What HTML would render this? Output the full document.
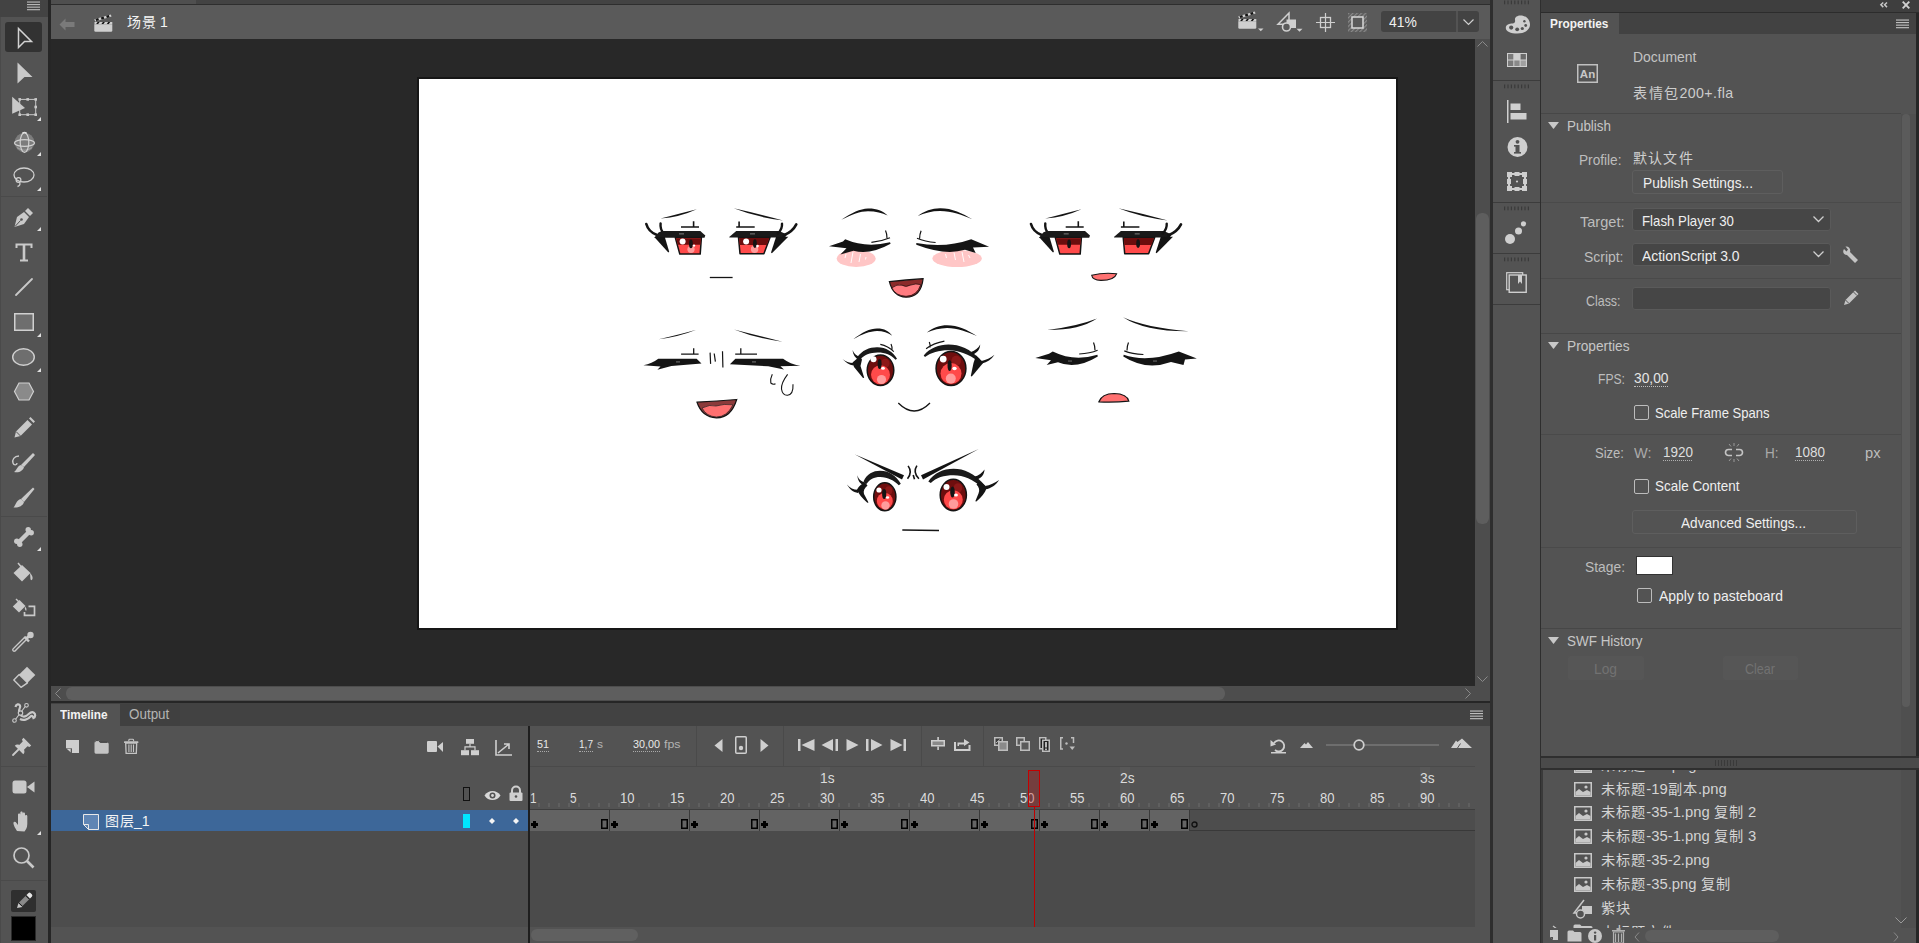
<!DOCTYPE html>
<html lang="zh-CN"><head><meta charset="utf-8">
<style>
*{margin:0;padding:0;box-sizing:border-box}
html,body{width:1919px;height:943px;overflow:hidden;background:#282828;font-family:"Liberation Sans",sans-serif;color:#d6d6d6;font-size:12px}
.a{position:absolute}
.t{position:absolute;white-space:nowrap;line-height:1}
svg{position:absolute;overflow:visible}
.cj{font-size:14px}
</style></head><body>

<div class="a" style="left:0px;top:0px;width:48px;height:943px;background:#535353;"></div>
<div class="a" style="left:0px;top:0px;width:48px;height:17px;background:#434343;"></div>
<div class="a" style="left:0px;top:17px;width:1px;height:926px;background:#4a4a4a;"></div>
<div class="a" style="left:48px;top:0px;width:3px;height:943px;background:#262626;"></div>
<div class="a" style="left:51px;top:0px;width:1439px;height:5px;background:#434343;"></div>
<div class="a" style="left:51px;top:0px;width:145px;height:4px;background:#4f4f4f;"></div>
<div class="a" style="left:51px;top:4px;width:1439px;height:1px;background:#2e2e2e;"></div>
<div class="a" style="left:51px;top:5px;width:1439px;height:34px;background:#5a5a5a;"></div>
<div class="a" style="left:51px;top:39px;width:1424px;height:647px;background:#282828;"></div>
<div class="a" style="left:1475px;top:39px;width:15px;height:662px;background:#4d4d4d;"></div>
<div class="a" style="left:1476px;top:213px;width:13px;height:311px;background:#5e5e5e;border-radius:6px"></div>
<div class="a" style="left:51px;top:686px;width:1424px;height:15px;background:#4d4d4d;"></div>
<div class="a" style="left:66px;top:687px;width:1159px;height:13px;background:#5e5e5e;border-radius:6px"></div>
<div class="a" style="left:51px;top:701px;width:1439px;height:2px;background:#262626;"></div>
<div class="a" style="left:417px;top:77px;width:981px;height:553px;background:#fff;border:2px solid #161616"></div>
<div class="a" style="left:51px;top:703px;width:1439px;height:23px;background:#424242;"></div>
<div class="a" style="left:51px;top:704px;width:69px;height:22px;background:#535353;"></div>
<div class="a" style="left:120px;top:704px;width:60px;height:22px;background:#404040;"></div>
<div class="a" style="left:51px;top:726px;width:1439px;height:217px;background:#535353;"></div>
<div class="a" style="left:51px;top:831px;width:478px;height:96px;background:#4d4d4d;"></div>
<div class="a" style="left:530px;top:831px;width:945px;height:96px;background:#4b4b4b;"></div>
<div class="a" style="left:1490px;top:0px;width:3px;height:943px;background:#2e2e2e;"></div>
<div class="a" style="left:1493px;top:0px;width:47px;height:943px;background:#535353;"></div>
<div class="a" style="left:1540px;top:0px;width:1px;height:943px;background:#2e2e2e;"></div>
<div class="a" style="left:1541px;top:0px;width:378px;height:943px;background:#535353;"></div>
<div class="a" style="left:1541px;top:0px;width:378px;height:13px;background:#3e3e3e;"></div>
<div class="a" style="left:1541px;top:13px;width:375px;height:21px;background:#424242;"></div>
<div class="a" style="left:1541px;top:13px;width:78px;height:21px;background:#535353;"></div>
<svg style="left:27px;top:1px" width="13" height="10" viewBox="0 0 13 10"><rect x="0" y="0.50" width="13" height="1.1" fill="#bdbdbd"/><rect x="0" y="3.05" width="13" height="1.1" fill="#bdbdbd"/><rect x="0" y="5.60" width="13" height="1.1" fill="#bdbdbd"/><rect x="0" y="8.15" width="13" height="1.1" fill="#bdbdbd"/></svg>
<div class="a" style="left:5px;top:22px;width:37px;height:30px;background:#323232;border-radius:3px"></div>
<svg style="left:17px;top:27px" width="16" height="22" viewBox="0 0 16 22"><path d="M1.5 1.5 L14.5 14.5 L7.5 14.5 L1.5 20.5 Z" fill="none" stroke="#d2d2d2" stroke-width="1.5" stroke-linejoin="miter"/></svg>
<svg style="left:17px;top:62px" width="16" height="22" viewBox="0 0 16 22"><path d="M0.5 0.5 L15.5 15 L7.5 15 L0.5 21.5 Z" fill="#c9c9c9"/></svg>
<svg style="left:12px;top:96px" width="26" height="20" viewBox="0 0 26 20"><path d="M0.2 0.8 L13 11.9 L0.2 17.8 Z" fill="#c9c9c9"/><rect x="7.7" y="3.4" width="16" height="15.3" fill="none" stroke="#c9c9c9" stroke-width="1"/><rect x="6.4" y="2.0999999999999996" width="2.6" height="2.6" fill="#c9c9c9"/><rect x="14.399999999999999" y="2.0999999999999996" width="2.6" height="2.6" fill="#c9c9c9"/><rect x="22.4" y="2.0999999999999996" width="2.6" height="2.6" fill="#c9c9c9"/><rect x="22.4" y="9.7" width="2.6" height="2.6" fill="#c9c9c9"/><rect x="22.4" y="17.4" width="2.6" height="2.6" fill="#c9c9c9"/><rect x="14.399999999999999" y="17.4" width="2.6" height="2.6" fill="#c9c9c9"/><rect x="6.4" y="17.4" width="2.6" height="2.6" fill="#c9c9c9"/></svg>
<svg style="left:37px;top:117px" width="4" height="4" viewBox="0 0 4 4"><path d="M4 0 L4 4 L0 4 Z" fill="#e0e0e0"/></svg>
<svg style="left:13.5px;top:131.5px" width="21" height="21" viewBox="0 0 21 21"><circle cx="10.5" cy="10.5" r="9.8" fill="#7c7c7c"/><path d="M3 15.5 Q10.5 21 18 15.5" stroke="#a0a0a0" stroke-width="1.2" fill="none"/><ellipse cx="10.5" cy="11" rx="10" ry="3.3" fill="none" stroke="#d0d0d0" stroke-width="1.3"/><ellipse cx="10.5" cy="10.5" rx="4.3" ry="9.8" fill="none" stroke="#d0d0d0" stroke-width="1.2"/><path d="M8.5 1 Q10.5 0 12.5 1" stroke="#e0e0e0" stroke-width="1.4" fill="none"/></svg>
<svg style="left:37px;top:152px" width="4" height="4" viewBox="0 0 4 4"><path d="M4 0 L4 4 L0 4 Z" fill="#e0e0e0"/></svg>
<svg style="left:13px;top:167px" width="22" height="21" viewBox="0 0 22 21"><ellipse cx="11" cy="8" rx="10" ry="7" fill="none" stroke="#cfcfcf" stroke-width="1.3"/><circle cx="5.5" cy="13" r="2.4" fill="none" stroke="#cfcfcf" stroke-width="1.2"/><path d="M6.5 15.2 C7.5 17 7 19 4.5 19.5" stroke="#cfcfcf" stroke-width="1.3" fill="none"/></svg>
<svg style="left:37px;top:187px" width="4" height="4" viewBox="0 0 4 4"><path d="M4 0 L4 4 L0 4 Z" fill="#e0e0e0"/></svg>
<div class="a" style="left:1px;top:196px;width:46px;height:1px;background:#4a4a4a;"></div>
<svg style="left:14px;top:207px" width="20" height="21" viewBox="0 0 20 21"><path d="M0.5 20 L3 10 L10 5 L15 10 L10 17 Z" fill="#c9c9c9"/><path d="M11 4 L14 1 L19 6 L16 9 Z" fill="#c9c9c9"/><path d="M1 19.5 L6.5 13.5" stroke="#535353" stroke-width="1"/><circle cx="7.5" cy="12.5" r="1.3" fill="#535353"/></svg>
<svg style="left:37px;top:227px" width="4" height="4" viewBox="0 0 4 4"><path d="M4 0 L4 4 L0 4 Z" fill="#e0e0e0"/></svg>
<svg style="left:15px;top:243px" width="18" height="19" viewBox="0 0 18 19"><path d="M0.5 0.5 H17.5 V5 H15.5 V2.5 H10.3 V16.5 H13 V18.5 H5 V16.5 H7.7 V2.5 H2.5 V5 H0.5 Z" fill="#c9c9c9"/></svg>
<svg style="left:15px;top:278px" width="18" height="18" viewBox="0 0 18 18"><path d="M1 17 L17 1" stroke="#c9c9c9" stroke-width="1.8" stroke-linecap="round"/></svg>
<svg style="left:14px;top:313px" width="20" height="18" viewBox="0 0 20 18"><rect x="0.75" y="0.75" width="18.5" height="16.5" fill="#6e6e6e" stroke="#d0d0d0" stroke-width="1.5"/></svg>
<svg style="left:37px;top:333px" width="4" height="4" viewBox="0 0 4 4"><path d="M4 0 L4 4 L0 4 Z" fill="#e0e0e0"/></svg>
<svg style="left:12px;top:348px" width="23" height="18" viewBox="0 0 23 18"><ellipse cx="11.5" cy="9" rx="10.8" ry="8.2" fill="#6e6e6e" stroke="#d0d0d0" stroke-width="1.4"/></svg>
<svg style="left:37px;top:368px" width="4" height="4" viewBox="0 0 4 4"><path d="M4 0 L4 4 L0 4 Z" fill="#e0e0e0"/></svg>
<svg style="left:14px;top:382px" width="20" height="19" viewBox="0 0 20 19"><path d="M5 1 H15 L19.5 9.5 L15 18 H5 L0.5 9.5 Z" fill="#8a8a8a" stroke="#d0d0d0" stroke-width="1.2"/></svg>
<svg style="left:14px;top:417px" width="21" height="21" viewBox="0 0 21 21"><path d="M0.5 20.5 L2 14.5 L13.5 3 L18 7.5 L6.5 19 Z" fill="#c9c9c9"/><path d="M15 1.5 L16.5 0 L21 4.5 L19.5 6 Z" fill="#c9c9c9"/><path d="M2 14.5 L6.5 19" stroke="#535353" stroke-width="1"/></svg>
<svg style="left:11px;top:452px" width="25" height="21" viewBox="0 0 25 21"><path d="M10 13 L22 1 L24 3 L13 15 Z" fill="#c9c9c9"/><path d="M13 15 C12 19 8 21 3 20 C6 18 6 14 10 13 Z" fill="#c9c9c9"/><path d="M8 4 C3 4 1 8 2 11 C3 14 6 13 6 11" fill="none" stroke="#c9c9c9" stroke-width="1.4"/></svg>
<svg style="left:13px;top:487px" width="22" height="21" viewBox="0 0 22 21"><path d="M8 12 L20 0.5 L21.5 2 L11 15 Z" fill="#c9c9c9"/><path d="M11 15 C10 19 5 21 0.5 20.5 C3 18 3 13 8 12 Z" fill="#c9c9c9"/></svg>
<div class="a" style="left:1px;top:516px;width:46px;height:1px;background:#4a4a4a;"></div>
<svg style="left:14px;top:527px" width="20" height="20" viewBox="0 0 20 20"><path d="M5 15 L15 5" stroke="#c9c9c9" stroke-width="4.5"/><circle cx="2.8" cy="14.2" r="2.7" fill="#c9c9c9"/><circle cx="5.8" cy="17.2" r="2.7" fill="#c9c9c9"/><circle cx="14.2" cy="2.8" r="2.7" fill="#c9c9c9"/><circle cx="17.2" cy="5.8" r="2.7" fill="#c9c9c9"/></svg>
<svg style="left:37px;top:547px" width="4" height="4" viewBox="0 0 4 4"><path d="M4 0 L4 4 L0 4 Z" fill="#e0e0e0"/></svg>
<svg style="left:13px;top:562px" width="21" height="21" viewBox="0 0 21 21"><path d="M0.5 11 L9 3 L17.5 11 L9 19.5 Z" fill="#c9c9c9"/><path d="M5 1 L10 7" stroke="#c9c9c9" stroke-width="1.5"/><path d="M17 11 C19 13 20 15 19.5 17 C19 18.5 17.5 18.5 17.5 17 Z" fill="#c9c9c9"/></svg>
<svg style="left:12px;top:598px" width="24" height="19" viewBox="0 0 24 19"><path d="M0.8 8.5 L7.5 2 L13.5 8 L7 14.5 Z" fill="#c9c9c9"/><path d="M4 1 L8.5 5.5" stroke="#c9c9c9" stroke-width="1.4"/><path d="M13 8.5 C14.5 10 15 11.5 14 13 C13 11.5 12.5 10.5 13 8.5 Z" fill="#c9c9c9"/><path d="M16.5 8.3 H22.5 V17.3 H12.5 V14" stroke="#c9c9c9" stroke-width="1.7" fill="none"/></svg>
<svg style="left:12px;top:631px" width="23" height="22" viewBox="0 0 23 22"><circle cx="18.5" cy="4" r="3.2" fill="#c9c9c9"/><path d="M12.5 6 L17 10.5" stroke="#c9c9c9" stroke-width="2.4"/><path d="M15 8 L4 19 Q2.5 21 1.2 19.8 Q0 18.5 2 17 L13 6 Z" fill="none" stroke="#c9c9c9" stroke-width="1.4"/><path d="M14.5 7.5 L16.5 5.5" stroke="#c9c9c9" stroke-width="3"/></svg>
<svg style="left:13px;top:666px" width="23" height="22" viewBox="0 0 23 22"><path d="M14 0.7 L22.3 9 L14.5 16.8 L6.2 8.5 Z" fill="#c9c9c9"/><path d="M6.2 8.5 L14.5 16.8 L8 21.3 L0.8 14 Z" fill="none" stroke="#c9c9c9" stroke-width="1.4" stroke-linejoin="round"/></svg>
<svg style="left:12px;top:703px" width="25" height="21" viewBox="0 0 25 21"><path d="M3.5 4 C4 1 7 0.5 8 2.5 C9 4.5 6.5 6 7 9 C7.5 12.5 11 14.5 14 13 C17 11.5 18.5 8 21.5 9.5 C24 11 23.5 14 21.5 15 C21 13 19.5 12.5 18.5 13.5 C16 16.5 11.5 18 8 16" stroke="#c9c9c9" stroke-width="2.2" fill="none"/><path d="M3 17 L14 2.5" stroke="#c9c9c9" stroke-width="1.2"/><circle cx="2.5" cy="17.5" r="1.8" fill="#535353" stroke="#c9c9c9" stroke-width="1.1"/><circle cx="14.5" cy="2.3" r="1.8" fill="#535353" stroke="#c9c9c9" stroke-width="1.1"/><circle cx="8.5" cy="10" r="2.2" fill="#535353" stroke="#c9c9c9" stroke-width="1.2"/></svg>
<svg style="left:12px;top:737px" width="20" height="19" viewBox="0 0 20 19"><path d="M11.5 0.8 L19.2 8.5 L17.5 10 L15.5 9.3 L12 12.8 C12.8 14.5 12.5 16 11.3 17.2 L2.8 8.7 C4 7.5 5.5 7.2 7.2 8 L10.7 4.5 L10 2.5 Z" fill="#c9c9c9"/><path d="M6.5 12.5 L1 18" stroke="#c9c9c9" stroke-width="1.8" stroke-linecap="round"/></svg>
<div class="a" style="left:1px;top:766px;width:46px;height:1px;background:#4a4a4a;"></div>
<svg style="left:12px;top:780px" width="23" height="14" viewBox="0 0 23 14"><rect x="0.5" y="0.5" width="14" height="13" rx="2.5" fill="#c9c9c9"/><path d="M15 7 L22.5 1.5 V12.5 Z" fill="#c9c9c9"/></svg>
<svg style="left:13px;top:811px" width="21" height="21" viewBox="0 0 21 21"><path d="M4 20 C2 17 0 13 0.5 11.5 C1 10.5 2.5 10.5 3.5 12 L5 14 V3.5 C5 2 7.3 2 7.3 3.5 V10 V1.8 C7.3 0.2 9.7 0.2 9.7 1.8 V10 V2.8 C9.7 1.2 12 1.2 12 2.8 V10.5 V5 C12 3.5 14.3 3.5 14.3 5 V13 C14.3 17 12.5 19 11.5 20.5 Z" fill="#c9c9c9"/></svg>
<svg style="left:37px;top:831px" width="4" height="4" viewBox="0 0 4 4"><path d="M4 0 L4 4 L0 4 Z" fill="#e0e0e0"/></svg>
<svg style="left:13px;top:847px" width="22" height="21" viewBox="0 0 22 21"><circle cx="8.5" cy="8.5" r="7.5" fill="none" stroke="#c9c9c9" stroke-width="1.7"/><path d="M14 14 L20.5 20.5" stroke="#c9c9c9" stroke-width="2.6"/></svg>
<div class="a" style="left:1px;top:880px;width:46px;height:1px;background:#4a4a4a;"></div>
<div class="a" style="left:11px;top:890px;width:25px;height:22px;background:#2f2f2f;border-radius:2px"></div>
<svg style="left:16px;top:892px" width="16" height="17" viewBox="0 0 16 17"><path d="M1 16 L2.5 11 L6.5 15 Z" fill="#c9c9c9"/><path d="M3 10.5 L10 3.5 L13.5 7 L6.5 14 Z" fill="#8a8a8a"/><path d="M10.5 3 L12.3 1.2 Q13.5 0 14.7 1.2 L15.8 2.3 Q17 3.5 15.8 4.7 L14 6.5 Z" fill="#e6e6e6"/><path d="M2.7 10.8 L6.2 14.3 M9.7 3.8 L13.2 7.3" stroke="#1e1e1e" stroke-width="1"/></svg>
<div class="a" style="left:11px;top:916px;width:25px;height:25px;background:#000;border:1px solid #2a2a2a"></div>
<svg style="left:1880px;top:2px" width="8" height="6" viewBox="0 0 8 6"><path d="M3.3 0.5 L0.9 2.8 L3.3 5.1 M7 0.5 L4.6 2.8 L7 5.1" stroke="#c8c8c8" stroke-width="1.5" fill="none"/></svg>
<div class="a" style="left:1541px;top:12px;width:378px;height:1px;background:#2c2c2c;"></div>
<svg style="left:1902px;top:1px" width="8" height="8" viewBox="0 0 8 8"><path d="M0.7 0.7 L7.3 7.3 M7.3 0.7 L0.7 7.3" stroke="#d0d0d0" stroke-width="1.9" fill="none"/></svg>
<div class="t" style="left:1550px;top:17.33px;font-size:13.2px;color:#f2f2f2;font-weight:bold;transform:scaleX(0.8960);transform-origin:0 0;">Properties</div>
<svg style="left:1896px;top:19px" width="13" height="10" viewBox="0 0 13 10"><rect x="0" y="0.50" width="13" height="1.1" fill="#c4c4c4"/><rect x="0" y="3.05" width="13" height="1.1" fill="#c4c4c4"/><rect x="0" y="5.60" width="13" height="1.1" fill="#c4c4c4"/><rect x="0" y="8.15" width="13" height="1.1" fill="#c4c4c4"/></svg>
<div class="a" style="left:1901px;top:114px;width:15px;height:643px;background:#4f4f4f;"></div>
<div class="a" style="left:1902px;top:114px;width:8px;height:593px;background:#5b5b5b;border-radius:4px"></div>
<div class="a" style="left:1916px;top:13px;width:3px;height:744px;background:#262626;"></div>
<svg style="left:1577px;top:64px" width="21" height="19" viewBox="0 0 21 19"><rect x="0.75" y="0.75" width="19.5" height="17.5" fill="none" stroke="#c0c0c0" stroke-width="1.5"/><text x="10.5" y="13.6" font-family="Liberation Sans" font-size="11.5" font-weight="bold" fill="#c8c8c8" text-anchor="middle">An</text></svg>
<div class="t" style="left:1633px;top:50.40px;font-size:14.3px;color:#c4c4c4;font-weight:normal;transform:scaleX(0.9743);transform-origin:0 0;">Document</div>
<div class="t" style="left:1633px;top:86.15px;font-size:14.00px;color:#cccccc;font-weight:normal;"><span style="font-size:14px;letter-spacing:1.5px">表情包</span><span style="font-size:14.2px;letter-spacing:0.4px">200+.fla</span></div>
<div class="a" style="left:1541px;top:113px;width:360px;height:1px;background:#474747;"></div>
<svg style="left:1548px;top:122px" width="11" height="7" viewBox="0 0 11 7"><path d="M0 0 L11 0 L5.5 7 Z" fill="#c8c8c8"/></svg>
<div class="t" style="left:1567px;top:118.50px;font-size:14.3px;color:#c6c6c6;font-weight:normal;transform:scaleX(0.9381);transform-origin:0 0;">Publish</div>
<div class="t" style="left:1579px;top:152.70px;font-size:14.3px;color:#bdbdbd;font-weight:normal;transform:scaleX(0.9549);transform-origin:0 0;">Profile:</div>
<div class="t" style="left:1633px;top:151.35px;font-size:14.00px;color:#cfcfcf;font-weight:normal;"><span class="cj" style="letter-spacing:1.2px">默认文件</span></div>
<div class="a" style="left:1632px;top:170px;width:151px;height:24px;background:transparent;border:1px solid #5e5e5e;border-radius:3px"></div>
<div class="t" style="left:1643px;top:175.70px;font-size:14.3px;color:#efefef;font-weight:normal;transform:scaleX(0.9610);transform-origin:0 0;">Publish Settings...</div>
<div class="a" style="left:1541px;top:202px;width:360px;height:1px;background:#4a4a4a;"></div>
<div class="t" style="left:1580px;top:215.20px;font-size:14.3px;color:#bdbdbd;font-weight:normal;transform:scaleX(1.0179);transform-origin:0 0;">Target:</div>
<div class="a" style="left:1632px;top:208px;width:199px;height:23px;background:#464646;border:1px solid #5a5a5a;border-radius:3px"></div>
<div class="t" style="left:1642px;top:213.50px;font-size:14.3px;color:#efefef;font-weight:normal;transform:scaleX(0.9260);transform-origin:0 0;">Flash Player 30</div>
<svg style="left:1813px;top:216px" width="11" height="6" viewBox="0 0 11 6"><path d="M0.5 0.5 L5.5 5.5 L10.5 0.5" stroke="#cfcfcf" stroke-width="1.3" fill="none"/></svg>
<div class="t" style="left:1584px;top:250.20px;font-size:14.3px;color:#bdbdbd;font-weight:normal;transform:scaleX(0.9747);transform-origin:0 0;">Script:</div>
<div class="a" style="left:1632px;top:243px;width:199px;height:23px;background:#464646;border:1px solid #5a5a5a;border-radius:3px"></div>
<div class="t" style="left:1642px;top:248.50px;font-size:14.3px;color:#efefef;font-weight:normal;transform:scaleX(0.9735);transform-origin:0 0;">ActionScript 3.0</div>
<svg style="left:1813px;top:251px" width="11" height="6" viewBox="0 0 11 6"><path d="M0.5 0.5 L5.5 5.5 L10.5 0.5" stroke="#cfcfcf" stroke-width="1.3" fill="none"/></svg>
<svg style="left:1841px;top:245px" width="18" height="19" viewBox="0 0 18 19"><path d="M3 4 C1 7 3 10 6 10 L14 18 L17 15 L9 7 C10 4 8 1 4.5 1.5 L7 4.5 L5.5 6.5 Z" fill="#c4c4c4"/></svg>
<div class="a" style="left:1541px;top:278px;width:360px;height:1px;background:#4a4a4a;"></div>
<div class="t" style="left:1586px;top:293.60px;font-size:14.3px;color:#bdbdbd;font-weight:normal;transform:scaleX(0.8683);transform-origin:0 0;">Class:</div>
<div class="a" style="left:1632px;top:287px;width:199px;height:23px;background:#464646;border:1px solid #5a5a5a;border-radius:3px"></div>
<svg style="left:1843px;top:289px" width="17" height="17" viewBox="0 0 17 17"><path d="M1 16 L2.5 11 L12 1.5 L15.5 5 L6 14.5 Z" fill="#c4c4c4"/><path d="M2.5 11 L6 14.5" stroke="#535353" stroke-width="1"/><path d="M10.5 3 L14 6.5" stroke="#535353" stroke-width="1"/></svg>
<div class="a" style="left:1541px;top:333px;width:360px;height:1px;background:#474747;"></div>
<svg style="left:1548px;top:342px" width="11" height="7" viewBox="0 0 11 7"><path d="M0 0 L11 0 L5.5 7 Z" fill="#c8c8c8"/></svg>
<div class="t" style="left:1567px;top:338.50px;font-size:14.3px;color:#c6c6c6;font-weight:normal;transform:scaleX(0.9590);transform-origin:0 0;">Properties</div>
<div class="t" style="left:1598px;top:372.30px;font-size:14.3px;color:#bdbdbd;font-weight:normal;transform:scaleX(0.8495);transform-origin:0 0;">FPS:</div>
<div class="t" style="left:1634px;top:370.50px;font-size:14.3px;color:#e6e6e6;font-weight:normal;transform:scaleX(0.9641);transform-origin:0 0;">30,00</div>
<div class="a" style="left:1634px;top:386px;width:34px;height:1px;background:transparent;border-top:1px dotted #bdbdbd"></div>
<div class="a" style="left:1634px;top:405px;width:15px;height:15px;background:transparent;border:1px solid #bcbcbc;border-radius:2px"></div>
<div class="t" style="left:1655px;top:405.50px;font-size:14.3px;color:#efefef;font-weight:normal;transform:scaleX(0.9118);transform-origin:0 0;">Scale Frame Spans</div>
<div class="a" style="left:1541px;top:434px;width:360px;height:1px;background:#4a4a4a;"></div>
<div class="t" style="left:1595px;top:446.20px;font-size:14.3px;color:#bdbdbd;font-weight:normal;transform:scaleX(0.9122);transform-origin:0 0;">Size:</div>
<div class="t" style="left:1634px;top:446.20px;font-size:14.3px;color:#aaaaaa;font-weight:normal;transform:scaleX(1.0166);transform-origin:0 0;">W:</div>
<div class="t" style="left:1662.5px;top:444.50px;font-size:14.3px;color:#dedede;font-weight:normal;transform:scaleX(0.9430);transform-origin:0 0;">1920</div>
<div class="a" style="left:1663px;top:460px;width:29px;height:1px;background:transparent;border-top:1px dotted #b0b0b0"></div>
<svg style="left:1724px;top:443px" width="20" height="19" viewBox="0 0 20 19"><path d="M8 6.5 L4.5 6.5 A3 3 0 0 0 4.5 12.5 L8 12.5 M12 6.5 L15.5 6.5 A3 3 0 0 1 15.5 12.5 L12 12.5" stroke="#c4c4c4" stroke-width="1.6" fill="none"/><path d="M10 0 V3 M10 16 V19 M5 1 L7 3.5 M15 1 L13 3.5 M5 18 L7 15.5 M15 18 L13 15.5" stroke="#9a9a9a" stroke-width="1"/></svg>
<div class="t" style="left:1765px;top:446.20px;font-size:14.3px;color:#aaaaaa;font-weight:normal;transform:scaleX(0.9441);transform-origin:0 0;">H:</div>
<div class="t" style="left:1795px;top:444.50px;font-size:14.3px;color:#dedede;font-weight:normal;transform:scaleX(0.9430);transform-origin:0 0;">1080</div>
<div class="a" style="left:1795px;top:460px;width:29px;height:1px;background:transparent;border-top:1px dotted #b0b0b0"></div>
<div class="t" style="left:1865px;top:446.20px;font-size:14.3px;color:#bdbdbd;font-weight:normal;transform:scaleX(1.0262);transform-origin:0 0;">px</div>
<div class="a" style="left:1634px;top:479px;width:15px;height:15px;background:transparent;border:1px solid #bcbcbc;border-radius:2px"></div>
<div class="t" style="left:1655px;top:479.00px;font-size:14.3px;color:#efefef;font-weight:normal;transform:scaleX(0.9407);transform-origin:0 0;">Scale Content</div>
<div class="a" style="left:1632px;top:510px;width:225px;height:24px;background:transparent;border:1px solid #5e5e5e;border-radius:3px"></div>
<div class="t" style="left:1681px;top:515.70px;font-size:14.3px;color:#efefef;font-weight:normal;transform:scaleX(0.9530);transform-origin:0 0;">Advanced Settings...</div>
<div class="a" style="left:1541px;top:547px;width:360px;height:1px;background:#4a4a4a;"></div>
<div class="t" style="left:1585px;top:560.20px;font-size:14.3px;color:#bdbdbd;font-weight:normal;transform:scaleX(0.9675);transform-origin:0 0;">Stage:</div>
<div class="a" style="left:1636px;top:556px;width:37px;height:19px;background:#ffffff;border:1px solid #333"></div>
<div class="a" style="left:1637px;top:588px;width:15px;height:15px;background:transparent;border:1px solid #bcbcbc;border-radius:2px"></div>
<div class="t" style="left:1658.5px;top:588.50px;font-size:14.3px;color:#efefef;font-weight:normal;transform:scaleX(0.9748);transform-origin:0 0;">Apply to pasteboard</div>
<div class="a" style="left:1541px;top:628px;width:360px;height:1px;background:#474747;"></div>
<svg style="left:1548px;top:637px" width="11" height="7" viewBox="0 0 11 7"><path d="M0 0 L11 0 L5.5 7 Z" fill="#c8c8c8"/></svg>
<div class="t" style="left:1567px;top:633.50px;font-size:14.3px;color:#c6c6c6;font-weight:normal;transform:scaleX(0.9410);transform-origin:0 0;">SWF History</div>
<div class="a" style="left:1568px;top:656px;width:76px;height:24px;background:#565656;border-radius:2px"></div>
<div class="t" style="left:1594px;top:662.30px;font-size:14.3px;color:#727272;font-weight:normal;transform:scaleX(0.9639);transform-origin:0 0;">Log</div>
<div class="a" style="left:1723px;top:656px;width:75px;height:24px;background:#565656;border-radius:2px"></div>
<div class="t" style="left:1745px;top:662.30px;font-size:14.3px;color:#727272;font-weight:normal;transform:scaleX(0.8779);transform-origin:0 0;">Clear</div>
<div class="a" style="left:1541px;top:756px;width:378px;height:2px;background:#2f2f2f;"></div>
<div class="a" style="left:1541px;top:758px;width:378px;height:10px;background:#4a4a4a;"></div>
<svg style="left:1715px;top:759px" width="24" height="8" viewBox="0 0 24 8"><rect x="0" y="1" width="1" height="6" fill="#3a3a3a"/><rect x="3" y="1" width="1" height="6" fill="#3a3a3a"/><rect x="6" y="1" width="1" height="6" fill="#3a3a3a"/><rect x="9" y="1" width="1" height="6" fill="#3a3a3a"/><rect x="12" y="1" width="1" height="6" fill="#3a3a3a"/><rect x="15" y="1" width="1" height="6" fill="#3a3a3a"/><rect x="18" y="1" width="1" height="6" fill="#3a3a3a"/><rect x="21" y="1" width="1" height="6" fill="#3a3a3a"/></svg>
<div class="a" style="left:1541px;top:768px;width:378px;height:2px;background:#2f2f2f;"></div>
<div class="a" style="left:1541px;top:770px;width:2px;height:173px;background:#3a3a3a;"></div>
<div class="a" style="left:1901px;top:770px;width:15px;height:158px;background:#4f4f4f;"></div>
<svg style="left:1895px;top:917px" width="12" height="7" viewBox="0 0 12 7"><path d="M0.5 0.5 L6 6 L11.5 0.5" stroke="#9a9a9a" stroke-width="1" fill="none"/></svg>
<div class="a" style="left:1916px;top:770px;width:3px;height:173px;background:#262626;"></div>
<div class="a" style="left:1543px;top:770px;width:358px;height:158px;overflow:hidden">
<svg style="left:31px;top:-12px" width="18" height="15" viewBox="0 0 18 15"><rect x="0" y="0" width="18" height="15" fill="#c8c8c8"/><rect x="1.5" y="1.5" width="15" height="12" fill="#535353"/><path d="M1.5 13.5 L1.5 10 L5 7 L9 10 L13 8 L16.5 10 L16.5 13.5 Z" fill="#c8c8c8"/></svg>
<div class="t" style="left:58px;top:-11.52px;font-size:14.20px;color:#d4d4d4;font-weight:normal;"><span style="font-size:14.2px;letter-spacing:1.1px">未标题</span><span style="font-size:14.8px">-19.png</span></div>
<svg style="left:9px;top:155px" width="6" height="8" viewBox="0 0 6 8"><path d="M1 1 L5 4" stroke="#c8c8c8" stroke-width="1.2"/></svg>
<svg style="left:30px;top:154px" width="20" height="12" viewBox="0 0 20 12"><path d="M0.5 2 Q0.5 0.5 2 0.5 H7 L8.5 2 H18 Q19.5 2 19.5 3.5 V11.5 H0.5 Z" fill="#c8c8c8"/></svg>
<div class="t" style="left:58px;top:154.98px;font-size:14.20px;color:#d4d4d4;font-weight:normal;"><span style="font-size:14.2px;letter-spacing:1.1px">未标题文件</span></div>
</div>
<svg style="left:1574px;top:782px" width="18" height="15" viewBox="0 0 18 15"><rect x="0" y="0" width="18" height="15" fill="#c8c8c8"/><rect x="1.5" y="1.5" width="15" height="12" fill="#535353"/><path d="M1.5 13.5 L1.5 10 L5 7 L9 10 L13 8 L16.5 10 L16.5 13.5 Z" fill="#c8c8c8"/><circle cx="12" cy="5" r="1.6" fill="#c8c8c8"/></svg>
<div class="t" style="left:1601px;top:781.98px;font-size:14.20px;color:#d4d4d4;font-weight:normal;"><span style="font-size:14.2px;letter-spacing:1.1px">未标题</span><span style="font-size:14.8px">-19</span><span style="font-size:14.2px;letter-spacing:1.1px">副本</span><span style="font-size:14.8px">.png</span></div>
<svg style="left:1574px;top:805.5px" width="18" height="15" viewBox="0 0 18 15"><rect x="0" y="0" width="18" height="15" fill="#c8c8c8"/><rect x="1.5" y="1.5" width="15" height="12" fill="#535353"/><path d="M1.5 13.5 L1.5 10 L5 7 L9 10 L13 8 L16.5 10 L16.5 13.5 Z" fill="#c8c8c8"/><circle cx="12" cy="5" r="1.6" fill="#c8c8c8"/></svg>
<div class="t" style="left:1601px;top:805.48px;font-size:14.20px;color:#d4d4d4;font-weight:normal;"><span style="font-size:14.2px;letter-spacing:1.1px">未标题</span><span style="font-size:14.8px">-35-1.png </span><span style="font-size:14.2px;letter-spacing:1.1px">复制</span><span style="font-size:14.8px"> 2</span></div>
<svg style="left:1574px;top:829px" width="18" height="15" viewBox="0 0 18 15"><rect x="0" y="0" width="18" height="15" fill="#c8c8c8"/><rect x="1.5" y="1.5" width="15" height="12" fill="#535353"/><path d="M1.5 13.5 L1.5 10 L5 7 L9 10 L13 8 L16.5 10 L16.5 13.5 Z" fill="#c8c8c8"/><circle cx="12" cy="5" r="1.6" fill="#c8c8c8"/></svg>
<div class="t" style="left:1601px;top:828.98px;font-size:14.20px;color:#d4d4d4;font-weight:normal;"><span style="font-size:14.2px;letter-spacing:1.1px">未标题</span><span style="font-size:14.8px">-35-1.png </span><span style="font-size:14.2px;letter-spacing:1.1px">复制</span><span style="font-size:14.8px"> 3</span></div>
<svg style="left:1574px;top:853px" width="18" height="15" viewBox="0 0 18 15"><rect x="0" y="0" width="18" height="15" fill="#c8c8c8"/><rect x="1.5" y="1.5" width="15" height="12" fill="#535353"/><path d="M1.5 13.5 L1.5 10 L5 7 L9 10 L13 8 L16.5 10 L16.5 13.5 Z" fill="#c8c8c8"/><circle cx="12" cy="5" r="1.6" fill="#c8c8c8"/></svg>
<div class="t" style="left:1601px;top:852.98px;font-size:14.20px;color:#d4d4d4;font-weight:normal;"><span style="font-size:14.2px;letter-spacing:1.1px">未标题</span><span style="font-size:14.8px">-35-2.png</span></div>
<svg style="left:1574px;top:877px" width="18" height="15" viewBox="0 0 18 15"><rect x="0" y="0" width="18" height="15" fill="#c8c8c8"/><rect x="1.5" y="1.5" width="15" height="12" fill="#535353"/><path d="M1.5 13.5 L1.5 10 L5 7 L9 10 L13 8 L16.5 10 L16.5 13.5 Z" fill="#c8c8c8"/><circle cx="12" cy="5" r="1.6" fill="#c8c8c8"/></svg>
<div class="t" style="left:1601px;top:876.98px;font-size:14.20px;color:#d4d4d4;font-weight:normal;"><span style="font-size:14.2px;letter-spacing:1.1px">未标题</span><span style="font-size:14.8px">-35.png </span><span style="font-size:14.2px;letter-spacing:1.1px">复制</span></div>
<svg style="left:1573px;top:899px" width="20" height="20" viewBox="0 0 20 20"><path d="M11 1 L1 14 L11 14" stroke="#c8c8c8" stroke-width="1.5" fill="none"/><rect x="9" y="7" width="10" height="8" fill="#c8c8c8"/><circle cx="7.5" cy="15" r="4" fill="#535353" stroke="#c8c8c8" stroke-width="1.5"/></svg>
<div class="t" style="left:1601px;top:900.98px;font-size:14.20px;color:#d4d4d4;font-weight:normal;"><span style="font-size:14.2px;letter-spacing:1.1px">紫块</span></div>
<svg style="left:1573px;top:924px" width="20" height="4" viewBox="0 0 20 4"><path d="M2 3 L2 1.5 L7 1.5 L9 3 Z" fill="#c8c8c8"/></svg>
<div class="a" style="left:1543px;top:928px;width:358px;height:15px;background:#535353;"></div>
<svg style="left:1549px;top:929px" width="10" height="12" viewBox="0 0 10 12"><path d="M1 1 H9 V11 H4 L1 8 Z" fill="#c8c8c8"/><path d="M1 8 L4 8 L4 11" fill="#535353"/></svg>
<svg style="left:1567px;top:930px" width="15" height="12" viewBox="0 0 15 12"><path d="M0.5 2 Q0.5 0.5 2 0.5 H6 L7.5 2 H13 Q14.5 2 14.5 3.5 V11.5 H0.5 Z" fill="#c8c8c8"/></svg>
<svg style="left:1588px;top:929px" width="14" height="14" viewBox="0 0 14 14"><circle cx="7" cy="7" r="7" fill="#c8c8c8"/><rect x="6" y="6" width="2.2" height="5.5" fill="#535353"/><circle cx="7.1" cy="3.6" r="1.2" fill="#535353"/></svg>
<svg style="left:1612px;top:928px" width="13" height="15" viewBox="0 0 13 15"><rect x="0" y="2" width="13" height="1.5" fill="#b0b0b0"/><rect x="4.5" y="0" width="4" height="2" fill="#b0b0b0"/><path d="M1.5 4 H11.5 V15 H1.5 Z M3.5 5.5 V14 M6.5 5.5 V14 M9.5 5.5 V14" stroke="#b0b0b0" stroke-width="1.2" fill="none"/></svg>
<svg style="left:1634px;top:932px" width="6" height="10" viewBox="0 0 6 10"><path d="M5 0.5 L1 5 L5 9.5" stroke="#8a8a8a" stroke-width="1" fill="none"/></svg>
<div class="a" style="left:1645px;top:930px;width:134px;height:12px;background:#5e5e5e;border-radius:6px"></div>
<svg style="left:1893px;top:932px" width="6" height="10" viewBox="0 0 6 10"><path d="M1 0.5 L5 5 L1 9.5" stroke="#8a8a8a" stroke-width="1" fill="none"/></svg>
<svg style="left:59px;top:18px" width="16" height="13" viewBox="0 0 16 13"><path d="M0.5 6.5 L6.5 0.5 V4 H15.5 V9 H6.5 V12.5 Z" fill="#7a7a7a"/></svg>
<svg style="left:94px;top:14px" width="19" height="18" viewBox="0 0 19 18"><path d="M0.3 5.2 L16.7 0.5 L17.6 2.6 L1.1 7.6 Z" fill="#cfcfcf"/><path d="M1.5 4.90 L4.2 4.10 L5.0 6.30 L2.3 7.10 Z" fill="#111"/><path d="M6.8 3.38 L9.5 2.58 L10.3 4.78 L7.6 5.58 Z" fill="#111"/><path d="M12.1 1.86 L14.8 1.06 L15.6 3.26 L12.9 4.06 Z" fill="#111"/><rect x="0.5" y="8" width="17.8" height="2.2" fill="#cfcfcf"/><path d="M2.0 10.2 L3.6 8 L5.6 8 L4.0 10.2 Z" fill="#111"/><path d="M7.3 10.2 L8.9 8 L10.9 8 L9.3 10.2 Z" fill="#111"/><path d="M12.6 10.2 L14.2 8 L16.2 8 L14.6 10.2 Z" fill="#111"/><path d="M0.3 10.2 H18.3 V16.5 Q18.3 17.8 17 17.8 H1.6 Q0.3 17.8 0.3 16.5 Z" fill="#cfcfcf"/></svg>
<div class="t" style="left:127px;top:15.15px;font-size:14.00px;color:#f4f4f4;font-weight:normal;"><span class="cj" style="letter-spacing:0.5px">场景</span><span style="font-size:14px"> 1</span></div>
<svg style="left:1237.5px;top:11px" width="26" height="21" viewBox="0 0 26 21"><path d="M0.3 5.2 L16.7 0.5 L17.6 2.6 L1.1 7.6 Z" fill="#cfcfcf"/><path d="M1.5 4.90 L4.2 4.10 L5.0 6.30 L2.3 7.10 Z" fill="#111"/><path d="M6.8 3.38 L9.5 2.58 L10.3 4.78 L7.6 5.58 Z" fill="#111"/><path d="M12.1 1.86 L14.8 1.06 L15.6 3.26 L12.9 4.06 Z" fill="#111"/><rect x="0.5" y="8" width="17.8" height="2.2" fill="#cfcfcf"/><path d="M2.0 10.2 L3.6 8 L5.6 8 L4.0 10.2 Z" fill="#111"/><path d="M7.3 10.2 L8.9 8 L10.9 8 L9.3 10.2 Z" fill="#111"/><path d="M12.6 10.2 L14.2 8 L16.2 8 L14.6 10.2 Z" fill="#111"/><path d="M0.3 10.2 H18.3 V16.5 Q18.3 17.8 17 17.8 H1.6 Q0.3 17.8 0.3 16.5 Z" fill="#cfcfcf"/><path d="M20 17.5 H25.5 L22.75 20.3 Z" fill="#cfcfcf"/></svg>
<svg style="left:1277px;top:11.5px" width="27" height="21" viewBox="0 0 27 21"><path d="M12 1 L1 12.2 H12 Z" fill="none" stroke="#cfcfcf" stroke-width="1.5" stroke-linejoin="miter"/><rect x="9.5" y="7.5" width="9.5" height="8.5" fill="#cfcfcf"/><circle cx="9.5" cy="15" r="4" fill="#5a5a5a" stroke="#cfcfcf" stroke-width="1.6"/><path d="M19.5 16.8 H25.5 L22.5 19.8 Z" fill="#cfcfcf"/></svg>
<svg style="left:1316px;top:12.5px" width="19" height="19" viewBox="0 0 19 19"><rect x="4.5" y="4.5" width="10" height="10" fill="none" stroke="#cfcfcf" stroke-width="1.3"/><path d="M9.5 0 V19 M0 9.5 H19" stroke="#cfcfcf" stroke-width="1.2"/></svg>
<svg style="left:1348px;top:13px" width="19" height="19" viewBox="0 0 19 19"><defs><pattern id="hatch" width="3" height="3" patternUnits="userSpaceOnUse" patternTransform="rotate(45)"><rect width="1.3" height="3" fill="#8a8a8a"/></pattern></defs><rect x="0" y="0" width="19" height="19" fill="url(#hatch)"/><rect x="4" y="4" width="11" height="11" fill="#5a5a5a" stroke="#d8d8d8" stroke-width="1.5"/></svg>
<div class="a" style="left:1381px;top:11px;width:98px;height:21px;background:#434343;border-radius:3px"></div>
<div class="a" style="left:1456px;top:11px;width:2px;height:21px;background:#535353;"></div>
<div class="t" style="left:1388.5px;top:15.00px;font-size:14.3px;color:#f0f0f0;font-weight:normal;transform:scaleX(0.9713);transform-origin:0 0;">41%</div>
<svg style="left:1463px;top:19px" width="11" height="6" viewBox="0 0 11 6"><path d="M0.5 0.5 L5.5 5.5 L10.5 0.5" stroke="#cfcfcf" stroke-width="1.2" fill="none"/></svg>
<svg style="left:1477px;top:41px" width="11" height="6" viewBox="0 0 11 6"><path d="M0.5 5.5 L5.5 0.5 L10.5 5.5" stroke="#8a8a8a" stroke-width="1" fill="none"/></svg>
<svg style="left:1477px;top:676px" width="11" height="6" viewBox="0 0 11 6"><path d="M0.5 0.5 L5.5 5.5 L10.5 0.5" stroke="#8a8a8a" stroke-width="1" fill="none"/></svg>
<svg style="left:55px;top:688px" width="6" height="11" viewBox="0 0 6 11"><path d="M5.5 0.5 L0.5 5.5 L5.5 10.5" stroke="#8a8a8a" stroke-width="1" fill="none"/></svg>
<svg style="left:1465px;top:688px" width="6" height="11" viewBox="0 0 6 11"><path d="M0.5 0.5 L5.5 5.5 L0.5 10.5" stroke="#8a8a8a" stroke-width="1" fill="none"/></svg>
<svg style="left:1504px;top:0px" width="25" height="5" viewBox="0 0 25 5"><rect x="0.0" y="0.5" width="1.2" height="3.8" fill="#3a3a3a"/><rect x="3.4" y="0.5" width="1.2" height="3.8" fill="#3a3a3a"/><rect x="6.8" y="0.5" width="1.2" height="3.8" fill="#3a3a3a"/><rect x="10.2" y="0.5" width="1.2" height="3.8" fill="#3a3a3a"/><rect x="13.6" y="0.5" width="1.2" height="3.8" fill="#3a3a3a"/><rect x="17.0" y="0.5" width="1.2" height="3.8" fill="#3a3a3a"/><rect x="20.4" y="0.5" width="1.2" height="3.8" fill="#3a3a3a"/><rect x="23.8" y="0.5" width="1.2" height="3.8" fill="#3a3a3a"/></svg>
<svg style="left:1505px;top:14.5px" width="26" height="19" viewBox="0 0 26 19"><path d="M0.8 13 C0.8 9.5 4.5 8.5 7.5 8.5 C9.5 8.5 10.5 7 10 5 C9.5 2.5 12 0.5 15.5 0.5 C21 0.5 25 4.5 25 9.5 C25 14.5 20 18.6 12.5 18.6 C5.5 18.6 0.8 16.5 0.8 13 Z" fill="#cfcfcf"/><circle cx="6.2" cy="12.6" r="2.1" fill="#535353"/><circle cx="12.2" cy="14.3" r="1.9" fill="#535353"/><circle cx="17.3" cy="13.5" r="1.6" fill="#535353"/><circle cx="20.7" cy="10.5" r="1.4" fill="#535353"/><circle cx="19.4" cy="6.3" r="1.2" fill="#535353"/></svg>
<svg style="left:1507px;top:53px" width="20" height="14" viewBox="0 0 20 14"><rect x="0" y="0" width="20" height="14" fill="#cfcfcf"/><rect x="1.0" y="1.0" width="5.3" height="5.5" fill="#7a7a7a"/><rect x="7.3" y="1.0" width="5.3" height="5.5" fill="#cfcfcf"/><rect x="13.6" y="1.0" width="5.3" height="5.5" fill="#6a6a6a"/><rect x="1.0" y="7.5" width="5.3" height="5.5" fill="#7a7a7a"/><rect x="7.3" y="7.5" width="5.3" height="5.5" fill="#8a8a8a"/><rect x="13.6" y="7.5" width="5.3" height="5.5" fill="#a0a0a0"/></svg>
<div class="a" style="left:1493px;top:80px;width:47px;height:1px;background:#3c3c3c;"></div>
<svg style="left:1504px;top:84px" width="25" height="5" viewBox="0 0 25 5"><rect x="0.0" y="0.5" width="1.2" height="3.8" fill="#3a3a3a"/><rect x="3.4" y="0.5" width="1.2" height="3.8" fill="#3a3a3a"/><rect x="6.8" y="0.5" width="1.2" height="3.8" fill="#3a3a3a"/><rect x="10.2" y="0.5" width="1.2" height="3.8" fill="#3a3a3a"/><rect x="13.6" y="0.5" width="1.2" height="3.8" fill="#3a3a3a"/><rect x="17.0" y="0.5" width="1.2" height="3.8" fill="#3a3a3a"/><rect x="20.4" y="0.5" width="1.2" height="3.8" fill="#3a3a3a"/><rect x="23.8" y="0.5" width="1.2" height="3.8" fill="#3a3a3a"/></svg>
<svg style="left:1507px;top:100px" width="20" height="23" viewBox="0 0 20 23"><rect x="0" y="0" width="1.5" height="23" fill="#cfcfcf"/><rect x="3.5" y="3.5" width="10" height="6.5" fill="#cfcfcf"/><rect x="3.5" y="13" width="16" height="6.5" fill="#cfcfcf"/></svg>
<svg style="left:1507px;top:137px" width="21" height="20" viewBox="0 0 21 20"><circle cx="10.5" cy="10" r="10" fill="#cfcfcf"/><rect x="8.5" y="8" width="4" height="8" fill="#535353"/><rect x="7" y="15" width="7" height="1.6" fill="#535353"/><rect x="7" y="8" width="3" height="1.6" fill="#535353"/><circle cx="10.5" cy="4.8" r="1.9" fill="#535353"/></svg>
<svg style="left:1507px;top:172px" width="20" height="19" viewBox="0 0 20 19"><path d="M2 2 H18 V17 H2 Z" fill="none" stroke="#cfcfcf" stroke-width="2.2"/><rect x="0" y="0" width="5" height="5" fill="#cfcfcf"/><rect x="15" y="0" width="5" height="5" fill="#cfcfcf"/><rect x="0" y="14" width="5" height="5" fill="#cfcfcf"/><rect x="15" y="14" width="5" height="5" fill="#cfcfcf"/><rect x="7.5" y="0" width="5" height="4" fill="#cfcfcf"/><rect x="7.5" y="15" width="5" height="4" fill="#cfcfcf"/><rect x="0" y="7" width="4" height="5" fill="#cfcfcf"/><rect x="16" y="7" width="4" height="5" fill="#cfcfcf"/><rect x="5" y="4" width="10" height="11" fill="#535353"/><circle cx="10" cy="9.5" r="1.1" fill="#cfcfcf"/></svg>
<div class="a" style="left:1493px;top:202px;width:47px;height:1px;background:#3c3c3c;"></div>
<svg style="left:1504px;top:206px" width="25" height="5" viewBox="0 0 25 5"><rect x="0.0" y="0.5" width="1.2" height="3.8" fill="#3a3a3a"/><rect x="3.4" y="0.5" width="1.2" height="3.8" fill="#3a3a3a"/><rect x="6.8" y="0.5" width="1.2" height="3.8" fill="#3a3a3a"/><rect x="10.2" y="0.5" width="1.2" height="3.8" fill="#3a3a3a"/><rect x="13.6" y="0.5" width="1.2" height="3.8" fill="#3a3a3a"/><rect x="17.0" y="0.5" width="1.2" height="3.8" fill="#3a3a3a"/><rect x="20.4" y="0.5" width="1.2" height="3.8" fill="#3a3a3a"/><rect x="23.8" y="0.5" width="1.2" height="3.8" fill="#3a3a3a"/></svg>
<svg style="left:1505px;top:220px" width="22" height="24" viewBox="0 0 22 24"><circle cx="5" cy="19" r="5" fill="#cfcfcf"/><circle cx="13.5" cy="11" r="3.5" fill="#cfcfcf"/><circle cx="18.5" cy="3.8" r="2.6" fill="#cfcfcf"/></svg>
<div class="a" style="left:1493px;top:253px;width:47px;height:1px;background:#3c3c3c;"></div>
<svg style="left:1504px;top:257px" width="25" height="5" viewBox="0 0 25 5"><rect x="0.0" y="0.5" width="1.2" height="3.8" fill="#3a3a3a"/><rect x="3.4" y="0.5" width="1.2" height="3.8" fill="#3a3a3a"/><rect x="6.8" y="0.5" width="1.2" height="3.8" fill="#3a3a3a"/><rect x="10.2" y="0.5" width="1.2" height="3.8" fill="#3a3a3a"/><rect x="13.6" y="0.5" width="1.2" height="3.8" fill="#3a3a3a"/><rect x="17.0" y="0.5" width="1.2" height="3.8" fill="#3a3a3a"/><rect x="20.4" y="0.5" width="1.2" height="3.8" fill="#3a3a3a"/><rect x="23.8" y="0.5" width="1.2" height="3.8" fill="#3a3a3a"/></svg>
<svg style="left:1506px;top:272px" width="21" height="21" viewBox="0 0 21 21"><rect x="0.7" y="0.7" width="16" height="17" fill="none" stroke="#cfcfcf" stroke-width="1.2"/><rect x="3.2" y="3" width="17" height="17.3" fill="#535353" stroke="#cfcfcf" stroke-width="1.4"/><path d="M12 3 V12 L14 9.5 L16 12 V3 Z" fill="#cfcfcf"/></svg>
<div class="a" style="left:1493px;top:304px;width:47px;height:1px;background:#3c3c3c;"></div>
<div class="t" style="left:60.3px;top:708.43px;font-size:13.2px;color:#f2f2f2;font-weight:bold;transform:scaleX(0.8929);transform-origin:0 0;">Timeline</div>
<div class="t" style="left:129px;top:707.30px;font-size:14.3px;color:#b4b4b4;font-weight:normal;transform:scaleX(0.9388);transform-origin:0 0;">Output</div>
<svg style="left:1470px;top:710px" width="13" height="10" viewBox="0 0 13 10"><rect x="0" y="0.50" width="13" height="1.1" fill="#c4c4c4"/><rect x="0" y="3.05" width="13" height="1.1" fill="#c4c4c4"/><rect x="0" y="5.60" width="13" height="1.1" fill="#c4c4c4"/><rect x="0" y="8.15" width="13" height="1.1" fill="#c4c4c4"/></svg>
<svg style="left:66px;top:740px" width="13" height="13" viewBox="0 0 13 13"><path d="M0 0 H13 V13 H5.8 V8.3 H0 Z" fill="#cfcfcf"/><path d="M0.6 8.8 H5.2 V12.8 Z" fill="#cfcfcf"/><path d="M5.2 8.8 V12.8" stroke="#3a3a3a" stroke-width="0.8"/></svg>
<svg style="left:94px;top:740px" width="15" height="14" viewBox="0 0 15 14"><path d="M0.5 2 Q0.5 0.3 2 0.3 H4.5 Q5.8 0.3 6 2 L6.2 2.5 H13.3 Q14.7 2.5 14.7 4 V12.3 Q14.7 13.7 13.3 13.7 H1.9 Q0.5 13.7 0.5 12.3 Z" fill="#c4c4c4"/><path d="M0.8 2.3 Q0.8 0.6 2 0.6 H4.5 Q5.6 0.6 5.8 2.3" stroke="#2e2e2e" stroke-width="0.8" fill="none"/><path d="M6.2 2.3 H13.3" stroke="#2e2e2e" stroke-width="0.8"/></svg>
<svg style="left:124px;top:739px" width="15" height="15" viewBox="0 0 15 15"><rect x="0" y="2.3" width="14.4" height="1.8" rx="0.6" fill="#c4c4c4"/><path d="M4.8 2.3 V1.2 Q4.8 0.3 5.8 0.3 H8.6 Q9.6 0.3 9.6 1.2 V2.3" stroke="#c4c4c4" stroke-width="1.1" fill="none"/><path d="M1.7 4.2 H12.7 L12.3 14.3 H2.1 Z" fill="none" stroke="#c4c4c4" stroke-width="1.3"/><path d="M4.9 5.5 V13 M7.2 5.5 V13 M9.5 5.5 V13" stroke="#c4c4c4" stroke-width="1.1"/></svg>
<svg style="left:427px;top:741px" width="16" height="12" viewBox="0 0 16 12"><rect x="0" y="0" width="10" height="11" rx="1" fill="#cfcfcf"/><path d="M10.5 5.5 L16 1 V11 Z" fill="#cfcfcf"/></svg>
<svg style="left:461px;top:739px" width="18" height="17" viewBox="0 0 18 17"><rect x="5" y="0" width="8" height="4.8" fill="#cfcfcf"/><path d="M9 4.8 V7.8 M4 11.2 V7.8 H14 V11.2" stroke="#cfcfcf" stroke-width="1.2" fill="none"/><rect x="0" y="11.2" width="8" height="5" fill="#cfcfcf"/><rect x="10" y="11.2" width="8" height="5" fill="#cfcfcf"/></svg>
<svg style="left:495px;top:740px" width="17" height="16" viewBox="0 0 17 16"><path d="M1 0 V15 H17" stroke="#cfcfcf" stroke-width="1.6" fill="none"/><path d="M3 13 L14 4 M9 4 H14 V9" stroke="#cfcfcf" stroke-width="1.6" fill="none"/></svg>
<div class="a" style="left:463px;top:787px;width:7px;height:14px;background:transparent;border:1.5px solid #111"></div>
<svg style="left:484px;top:790px" width="17" height="11" viewBox="0 0 17 11"><path d="M0.5 5.5 C4 -0.5 13 -0.5 16.5 5.5 C13 11.5 4 11.5 0.5 5.5 Z" fill="#d8d8d8"/><circle cx="8.5" cy="5.5" r="3" fill="#535353"/><circle cx="8.5" cy="5.5" r="1.4" fill="#d8d8d8"/></svg>
<svg style="left:509px;top:786px" width="14" height="15" viewBox="0 0 14 15"><path d="M3 7 V4.5 A4 4 0 0 1 11 4.5 V7" stroke="#cfcfcf" stroke-width="2" fill="none"/><rect x="0.5" y="6.5" width="13" height="8.5" rx="1" fill="#cfcfcf"/><circle cx="7" cy="10.5" r="1.3" fill="#535353"/></svg>
<div class="a" style="left:51px;top:810px;width:478px;height:21px;background:#3d6799;"></div>
<svg style="left:83px;top:814px" width="16" height="16" viewBox="0 0 16 16"><path d="M0.5 0.5 H15.5 V15.5 H5.5 L0.5 10.5 Z" fill="#5f85b4" stroke="#e8e8e8" stroke-width="1"/><path d="M0.5 10.5 H5.5 V15.5" fill="none" stroke="#e8e8e8" stroke-width="1"/></svg>
<div class="t" style="left:105.3px;top:814.15px;font-size:14.00px;color:#f4f4f4;font-weight:normal;"><span class="cj" style="letter-spacing:0.3px">图层</span><span style="font-size:14px">_1</span></div>
<div class="a" style="left:463px;top:814px;width:7px;height:14px;background:#00e5ff;"></div>
<svg style="left:489px;top:818px" width="6" height="6" viewBox="0 0 6 6"><path d="M3 0 L6 3 L3 6 L0 3 Z" fill="#f4f4f4"/></svg>
<svg style="left:513px;top:818px" width="6" height="6" viewBox="0 0 6 6"><path d="M3 0 L6 3 L3 6 L0 3 Z" fill="#f4f4f4"/></svg>
<div class="t" style="left:537px;top:739.01px;font-size:11.8px;color:#e8e8e8;font-weight:normal;transform:scaleX(0.9142);transform-origin:0 0;">51</div>
<div class="a" style="left:537px;top:751px;width:12px;height:1px;background:transparent;border-top:1px dotted #aaa"></div>
<div class="t" style="left:578.7px;top:739.01px;font-size:11.8px;color:#e8e8e8;font-weight:normal;transform:scaleX(0.8535);transform-origin:0 0;">1,7</div>
<div class="t" style="left:597px;top:739.01px;font-size:11.8px;color:#b4b4b4;font-weight:normal;transform:scaleX(1.0169);transform-origin:0 0;">s</div>
<div class="a" style="left:579px;top:751px;width:14px;height:1px;background:transparent;border-top:1px dotted #aaa"></div>
<div class="t" style="left:633px;top:739.01px;font-size:11.8px;color:#e8e8e8;font-weight:normal;transform:scaleX(0.9143);transform-origin:0 0;">30,00</div>
<div class="t" style="left:664px;top:739.01px;font-size:11.8px;color:#b4b4b4;font-weight:normal;transform:scaleX(1.0482);transform-origin:0 0;">fps</div>
<div class="a" style="left:633px;top:751px;width:27px;height:1px;background:transparent;border-top:1px dotted #aaa"></div>
<div class="a" style="left:696px;top:726px;width:1px;height:40px;background:#4a4a4a;"></div>
<div class="a" style="left:783px;top:726px;width:1px;height:40px;background:#4a4a4a;"></div>
<div class="a" style="left:921px;top:726px;width:1px;height:40px;background:#4a4a4a;"></div>
<div class="a" style="left:983px;top:726px;width:1px;height:40px;background:#4a4a4a;"></div>
<div class="a" style="left:530px;top:766px;width:945px;height:1px;background:#4a4a4a;"></div>
<svg style="left:714px;top:739px" width="9" height="13" viewBox="0 0 9 13"><path d="M8.5 0 V13 L0.5 6.5 Z" fill="#cfcfcf"/></svg>
<svg style="left:735px;top:736px" width="12" height="18" viewBox="0 0 12 18"><rect x="0.75" y="0.75" width="10.5" height="16.5" rx="1" fill="none" stroke="#cfcfcf" stroke-width="1.5"/><circle cx="6" cy="12" r="2.2" fill="#cfcfcf"/></svg>
<svg style="left:760px;top:739px" width="9" height="13" viewBox="0 0 9 13"><path d="M0.5 0 V13 L8.5 6.5 Z" fill="#cfcfcf"/></svg>
<svg style="left:798px;top:739px" width="17" height="12" viewBox="0 0 17 12"><rect x="0" y="0" width="2.5" height="12" fill="#cfcfcf"/><path d="M16.5 0 V12 L3.5 6 Z" fill="#cfcfcf"/></svg>
<svg style="left:821px;top:739px" width="17" height="12" viewBox="0 0 17 12"><path d="M12 0 V12 L0.5 6 Z" fill="#cfcfcf"/><rect x="14.5" y="0" width="2.5" height="12" fill="#cfcfcf"/></svg>
<svg style="left:845.5px;top:739px" width="13" height="12" viewBox="0 0 13 12"><path d="M0.5 0 V12 L12.5 6 Z" fill="#cfcfcf"/></svg>
<svg style="left:866px;top:739px" width="17" height="12" viewBox="0 0 17 12"><rect x="0" y="0" width="2.5" height="12" fill="#cfcfcf"/><path d="M5 0 V12 L16.5 6 Z" fill="#cfcfcf"/></svg>
<svg style="left:889.5px;top:739px" width="16" height="12" viewBox="0 0 16 12"><path d="M0.5 0 V12 L12.5 6 Z" fill="#cfcfcf"/><rect x="13.5" y="0" width="2.5" height="12" fill="#cfcfcf"/></svg>
<svg style="left:931px;top:737px" width="14" height="13" viewBox="0 0 14 13"><rect x="0.75" y="3.75" width="12.5" height="5" fill="#8a8a8a" stroke="#cfcfcf" stroke-width="1.5"/><rect x="6.3" y="0" width="1.6" height="3" fill="#cfcfcf"/><rect x="6.3" y="9.5" width="1.6" height="3.5" fill="#cfcfcf"/></svg>
<svg style="left:954px;top:738px" width="17" height="13" viewBox="0 0 17 13"><path d="M1 4 V12 H15.5 V7" stroke="#cfcfcf" stroke-width="2" fill="none"/><path d="M3.5 8 V4.5 H10 V1 L15.5 4.5 L10 8 V6.5 H5 V8 Z" fill="#cfcfcf"/></svg>
<svg style="left:994px;top:737px" width="14" height="14" viewBox="0 0 14 14"><rect x="0.75" y="0.75" width="7.5" height="7.5" fill="#3a3a3a" stroke="#bdbdbd" stroke-width="1.5"/><path d="M2 6 L6.5 2" stroke="#bdbdbd" stroke-width="1"/><rect x="4.75" y="4.75" width="8.5" height="8.5" fill="#8a8a8a" stroke="#bdbdbd" stroke-width="1.5"/></svg>
<svg style="left:1016px;top:737px" width="14" height="14" viewBox="0 0 14 14"><rect x="0.75" y="0.75" width="7.5" height="7.5" fill="#5a5a5a" stroke="#bdbdbd" stroke-width="1.5"/><rect x="4.75" y="4.75" width="8.5" height="8.5" fill="#5a5a5a" stroke="#bdbdbd" stroke-width="1.5"/></svg>
<svg style="left:1038.5px;top:737px" width="11" height="15" viewBox="0 0 11 15"><rect x="0.75" y="0.75" width="6" height="11" fill="#222" stroke="#bdbdbd" stroke-width="1.5"/><rect x="3.75" y="3.25" width="6.5" height="11" fill="#222" stroke="#bdbdbd" stroke-width="1.5"/><rect x="6.2" y="5" width="1.6" height="5.5" fill="#ddd"/><rect x="6.2" y="11.5" width="1.6" height="1.6" fill="#ddd"/></svg>
<svg style="left:1060px;top:737px" width="15" height="15" viewBox="0 0 15 15"><path d="M3 0.75 H0.75 V12 H3 M11 0.75 H13.5 V6" stroke="#bdbdbd" stroke-width="1.5" fill="none"/><circle cx="6.5" cy="6.5" r="1.2" fill="#bdbdbd"/><path d="M9.5 9.5 H15 L12.25 13 Z" fill="#bdbdbd"/></svg>
<svg style="left:1270px;top:739px" width="17" height="15" viewBox="0 0 17 15"><path d="M4 4 A5.5 5.5 0 1 1 5 11" stroke="#cfcfcf" stroke-width="1.8" fill="none"/><path d="M0.5 1 L6 5.5 L0.5 7.5 Z" fill="#cfcfcf"/><rect x="1" y="13" width="15" height="1.5" fill="#cfcfcf"/></svg>
<svg style="left:1300px;top:742px" width="13" height="6" viewBox="0 0 13 6"><path d="M0 6 L4.5 1 L6 2.5 L8 0 L13 6 Z" fill="#cfcfcf"/></svg>
<div class="a" style="left:1326px;top:744px;width:113px;height:2px;background:#6e6e6e;"></div>
<svg style="left:1353px;top:739px" width="12" height="12" viewBox="0 0 12 12"><circle cx="6" cy="6" r="4.8" fill="#535353" stroke="#cfcfcf" stroke-width="1.8"/></svg>
<svg style="left:1451px;top:739px" width="21" height="9" viewBox="0 0 21 9"><path d="M0 9 L5 1.5 L6.5 3 L11 -0.5 L21 9 Z" fill="#cfcfcf"/><path d="M6.5 9 L9.5 4.5" stroke="#535353" stroke-width="1"/></svg>
<div class="a" style="left:820px;top:767px;width:10px;height:43px;background:#585858;"></div>
<div class="a" style="left:1120px;top:767px;width:10px;height:43px;background:#585858;"></div>
<div class="a" style="left:1420px;top:767px;width:10px;height:43px;background:#585858;"></div>
<div class="t" style="left:820px;top:771.05px;font-size:14px;color:#dcdcdc;font-weight:normal;transform:scaleX(0.9806);transform-origin:0 0;">1s</div>
<div class="t" style="left:1120px;top:771.05px;font-size:14px;color:#dcdcdc;font-weight:normal;transform:scaleX(0.9806);transform-origin:0 0;">2s</div>
<div class="t" style="left:1420px;top:771.05px;font-size:14px;color:#dcdcdc;font-weight:normal;transform:scaleX(0.9806);transform-origin:0 0;">3s</div>
<div class="t" style="left:530px;top:790.85px;font-size:14px;color:#dcdcdc;font-weight:normal;transform:scaleX(0.8475);transform-origin:0 0;">1</div>
<div class="t" style="left:570px;top:790.85px;font-size:14px;color:#dcdcdc;font-weight:normal;transform:scaleX(0.8475);transform-origin:0 0;">5</div>
<div class="t" style="left:620px;top:790.85px;font-size:14px;color:#dcdcdc;font-weight:normal;transform:scaleX(0.9311);transform-origin:0 0;">10</div>
<div class="t" style="left:670px;top:790.85px;font-size:14px;color:#dcdcdc;font-weight:normal;transform:scaleX(0.9311);transform-origin:0 0;">15</div>
<div class="t" style="left:720px;top:790.85px;font-size:14px;color:#dcdcdc;font-weight:normal;transform:scaleX(0.9311);transform-origin:0 0;">20</div>
<div class="t" style="left:770px;top:790.85px;font-size:14px;color:#dcdcdc;font-weight:normal;transform:scaleX(0.9311);transform-origin:0 0;">25</div>
<div class="t" style="left:820px;top:790.85px;font-size:14px;color:#dcdcdc;font-weight:normal;transform:scaleX(0.9311);transform-origin:0 0;">30</div>
<div class="t" style="left:870px;top:790.85px;font-size:14px;color:#dcdcdc;font-weight:normal;transform:scaleX(0.9311);transform-origin:0 0;">35</div>
<div class="t" style="left:920px;top:790.85px;font-size:14px;color:#dcdcdc;font-weight:normal;transform:scaleX(0.9311);transform-origin:0 0;">40</div>
<div class="t" style="left:970px;top:790.85px;font-size:14px;color:#dcdcdc;font-weight:normal;transform:scaleX(0.9311);transform-origin:0 0;">45</div>
<div class="t" style="left:1020px;top:790.85px;font-size:14px;color:#dcdcdc;font-weight:normal;transform:scaleX(0.9311);transform-origin:0 0;">50</div>
<div class="t" style="left:1070px;top:790.85px;font-size:14px;color:#dcdcdc;font-weight:normal;transform:scaleX(0.9311);transform-origin:0 0;">55</div>
<div class="t" style="left:1120px;top:790.85px;font-size:14px;color:#dcdcdc;font-weight:normal;transform:scaleX(0.9311);transform-origin:0 0;">60</div>
<div class="t" style="left:1170px;top:790.85px;font-size:14px;color:#dcdcdc;font-weight:normal;transform:scaleX(0.9311);transform-origin:0 0;">65</div>
<div class="t" style="left:1220px;top:790.85px;font-size:14px;color:#dcdcdc;font-weight:normal;transform:scaleX(0.9311);transform-origin:0 0;">70</div>
<div class="t" style="left:1270px;top:790.85px;font-size:14px;color:#dcdcdc;font-weight:normal;transform:scaleX(0.9311);transform-origin:0 0;">75</div>
<div class="t" style="left:1320px;top:790.85px;font-size:14px;color:#dcdcdc;font-weight:normal;transform:scaleX(0.9311);transform-origin:0 0;">80</div>
<div class="t" style="left:1370px;top:790.85px;font-size:14px;color:#dcdcdc;font-weight:normal;transform:scaleX(0.9311);transform-origin:0 0;">85</div>
<div class="t" style="left:1420px;top:790.85px;font-size:14px;color:#dcdcdc;font-weight:normal;transform:scaleX(0.9311);transform-origin:0 0;">90</div>
<svg style="left:530px;top:803px" width="945" height="4" viewBox="0 0 945 4"><rect x="8.5" y="0" width="1" height="4" fill="#6c6c6c"/><rect x="18.5" y="0" width="1" height="4" fill="#6c6c6c"/><rect x="28.5" y="0" width="1" height="4" fill="#6c6c6c"/><rect x="38.5" y="0" width="1" height="4" fill="#6c6c6c"/><rect x="48.5" y="0" width="1" height="4" fill="#6c6c6c"/><rect x="58.5" y="0" width="1" height="4" fill="#6c6c6c"/><rect x="68.5" y="0" width="1" height="4" fill="#6c6c6c"/><rect x="78.5" y="0" width="1" height="4" fill="#6c6c6c"/><rect x="88.5" y="0" width="1" height="4" fill="#6c6c6c"/><rect x="98.5" y="0" width="1" height="4" fill="#6c6c6c"/><rect x="108.5" y="0" width="1" height="4" fill="#6c6c6c"/><rect x="118.5" y="0" width="1" height="4" fill="#6c6c6c"/><rect x="128.5" y="0" width="1" height="4" fill="#6c6c6c"/><rect x="138.5" y="0" width="1" height="4" fill="#6c6c6c"/><rect x="148.5" y="0" width="1" height="4" fill="#6c6c6c"/><rect x="158.5" y="0" width="1" height="4" fill="#6c6c6c"/><rect x="168.5" y="0" width="1" height="4" fill="#6c6c6c"/><rect x="178.5" y="0" width="1" height="4" fill="#6c6c6c"/><rect x="188.5" y="0" width="1" height="4" fill="#6c6c6c"/><rect x="198.5" y="0" width="1" height="4" fill="#6c6c6c"/><rect x="208.5" y="0" width="1" height="4" fill="#6c6c6c"/><rect x="218.5" y="0" width="1" height="4" fill="#6c6c6c"/><rect x="228.5" y="0" width="1" height="4" fill="#6c6c6c"/><rect x="238.5" y="0" width="1" height="4" fill="#6c6c6c"/><rect x="248.5" y="0" width="1" height="4" fill="#6c6c6c"/><rect x="258.5" y="0" width="1" height="4" fill="#6c6c6c"/><rect x="268.5" y="0" width="1" height="4" fill="#6c6c6c"/><rect x="278.5" y="0" width="1" height="4" fill="#6c6c6c"/><rect x="288.5" y="0" width="1" height="4" fill="#6c6c6c"/><rect x="298.5" y="0" width="1" height="4" fill="#6c6c6c"/><rect x="308.5" y="0" width="1" height="4" fill="#6c6c6c"/><rect x="318.5" y="0" width="1" height="4" fill="#6c6c6c"/><rect x="328.5" y="0" width="1" height="4" fill="#6c6c6c"/><rect x="338.5" y="0" width="1" height="4" fill="#6c6c6c"/><rect x="348.5" y="0" width="1" height="4" fill="#6c6c6c"/><rect x="358.5" y="0" width="1" height="4" fill="#6c6c6c"/><rect x="368.5" y="0" width="1" height="4" fill="#6c6c6c"/><rect x="378.5" y="0" width="1" height="4" fill="#6c6c6c"/><rect x="388.5" y="0" width="1" height="4" fill="#6c6c6c"/><rect x="398.5" y="0" width="1" height="4" fill="#6c6c6c"/><rect x="408.5" y="0" width="1" height="4" fill="#6c6c6c"/><rect x="418.5" y="0" width="1" height="4" fill="#6c6c6c"/><rect x="428.5" y="0" width="1" height="4" fill="#6c6c6c"/><rect x="438.5" y="0" width="1" height="4" fill="#6c6c6c"/><rect x="448.5" y="0" width="1" height="4" fill="#6c6c6c"/><rect x="458.5" y="0" width="1" height="4" fill="#6c6c6c"/><rect x="468.5" y="0" width="1" height="4" fill="#6c6c6c"/><rect x="478.5" y="0" width="1" height="4" fill="#6c6c6c"/><rect x="488.5" y="0" width="1" height="4" fill="#6c6c6c"/><rect x="498.5" y="0" width="1" height="4" fill="#6c6c6c"/><rect x="508.5" y="0" width="1" height="4" fill="#6c6c6c"/><rect x="518.5" y="0" width="1" height="4" fill="#6c6c6c"/><rect x="528.5" y="0" width="1" height="4" fill="#6c6c6c"/><rect x="538.5" y="0" width="1" height="4" fill="#6c6c6c"/><rect x="548.5" y="0" width="1" height="4" fill="#6c6c6c"/><rect x="558.5" y="0" width="1" height="4" fill="#6c6c6c"/><rect x="568.5" y="0" width="1" height="4" fill="#6c6c6c"/><rect x="578.5" y="0" width="1" height="4" fill="#6c6c6c"/><rect x="588.5" y="0" width="1" height="4" fill="#6c6c6c"/><rect x="598.5" y="0" width="1" height="4" fill="#6c6c6c"/><rect x="608.5" y="0" width="1" height="4" fill="#6c6c6c"/><rect x="618.5" y="0" width="1" height="4" fill="#6c6c6c"/><rect x="628.5" y="0" width="1" height="4" fill="#6c6c6c"/><rect x="638.5" y="0" width="1" height="4" fill="#6c6c6c"/><rect x="648.5" y="0" width="1" height="4" fill="#6c6c6c"/><rect x="658.5" y="0" width="1" height="4" fill="#6c6c6c"/><rect x="668.5" y="0" width="1" height="4" fill="#6c6c6c"/><rect x="678.5" y="0" width="1" height="4" fill="#6c6c6c"/><rect x="688.5" y="0" width="1" height="4" fill="#6c6c6c"/><rect x="698.5" y="0" width="1" height="4" fill="#6c6c6c"/><rect x="708.5" y="0" width="1" height="4" fill="#6c6c6c"/><rect x="718.5" y="0" width="1" height="4" fill="#6c6c6c"/><rect x="728.5" y="0" width="1" height="4" fill="#6c6c6c"/><rect x="738.5" y="0" width="1" height="4" fill="#6c6c6c"/><rect x="748.5" y="0" width="1" height="4" fill="#6c6c6c"/><rect x="758.5" y="0" width="1" height="4" fill="#6c6c6c"/><rect x="768.5" y="0" width="1" height="4" fill="#6c6c6c"/><rect x="778.5" y="0" width="1" height="4" fill="#6c6c6c"/><rect x="788.5" y="0" width="1" height="4" fill="#6c6c6c"/><rect x="798.5" y="0" width="1" height="4" fill="#6c6c6c"/><rect x="808.5" y="0" width="1" height="4" fill="#6c6c6c"/><rect x="818.5" y="0" width="1" height="4" fill="#6c6c6c"/><rect x="828.5" y="0" width="1" height="4" fill="#6c6c6c"/><rect x="838.5" y="0" width="1" height="4" fill="#6c6c6c"/><rect x="848.5" y="0" width="1" height="4" fill="#6c6c6c"/><rect x="858.5" y="0" width="1" height="4" fill="#6c6c6c"/><rect x="868.5" y="0" width="1" height="4" fill="#6c6c6c"/><rect x="878.5" y="0" width="1" height="4" fill="#6c6c6c"/><rect x="888.5" y="0" width="1" height="4" fill="#6c6c6c"/><rect x="898.5" y="0" width="1" height="4" fill="#6c6c6c"/><rect x="908.5" y="0" width="1" height="4" fill="#6c6c6c"/><rect x="918.5" y="0" width="1" height="4" fill="#6c6c6c"/><rect x="928.5" y="0" width="1" height="4" fill="#6c6c6c"/><rect x="938.5" y="0" width="1" height="4" fill="#6c6c6c"/></svg>
<div class="a" style="left:530px;top:810px;width:945px;height:21px;background:#4d4d4d;"></div>
<div class="a" style="left:530px;top:830px;width:945px;height:1px;background:#393939;"></div>
<div class="a" style="left:530px;top:809px;width:945px;height:1px;background:#3e3e3e;"></div>
<div class="a" style="left:530px;top:810px;width:80px;height:21px;background:#636363;border-right:1px solid #3a3a3a"></div>
<svg style="left:531px;top:821px" width="7" height="7" viewBox="0 0 7 7"><path d="M2 0 H5 V2 H7 V5 H5 V7 H2 V5 H0 V2 H2 Z" fill="#000"/></svg>
<svg style="left:601px;top:819px" width="7" height="10" viewBox="0 0 7 10"><rect x="0.75" y="0.75" width="5.5" height="8.5" fill="none" stroke="#000" stroke-width="1.5"/></svg>
<div class="a" style="left:610px;top:810px;width:80px;height:21px;background:#636363;border-right:1px solid #3a3a3a"></div>
<svg style="left:611px;top:821px" width="7" height="7" viewBox="0 0 7 7"><path d="M2 0 H5 V2 H7 V5 H5 V7 H2 V5 H0 V2 H2 Z" fill="#000"/></svg>
<svg style="left:681px;top:819px" width="7" height="10" viewBox="0 0 7 10"><rect x="0.75" y="0.75" width="5.5" height="8.5" fill="none" stroke="#000" stroke-width="1.5"/></svg>
<div class="a" style="left:690px;top:810px;width:70px;height:21px;background:#636363;border-right:1px solid #3a3a3a"></div>
<svg style="left:691px;top:821px" width="7" height="7" viewBox="0 0 7 7"><path d="M2 0 H5 V2 H7 V5 H5 V7 H2 V5 H0 V2 H2 Z" fill="#000"/></svg>
<svg style="left:751px;top:819px" width="7" height="10" viewBox="0 0 7 10"><rect x="0.75" y="0.75" width="5.5" height="8.5" fill="none" stroke="#000" stroke-width="1.5"/></svg>
<div class="a" style="left:760px;top:810px;width:80px;height:21px;background:#636363;border-right:1px solid #3a3a3a"></div>
<svg style="left:761px;top:821px" width="7" height="7" viewBox="0 0 7 7"><path d="M2 0 H5 V2 H7 V5 H5 V7 H2 V5 H0 V2 H2 Z" fill="#000"/></svg>
<svg style="left:831px;top:819px" width="7" height="10" viewBox="0 0 7 10"><rect x="0.75" y="0.75" width="5.5" height="8.5" fill="none" stroke="#000" stroke-width="1.5"/></svg>
<div class="a" style="left:840px;top:810px;width:70px;height:21px;background:#636363;border-right:1px solid #3a3a3a"></div>
<svg style="left:841px;top:821px" width="7" height="7" viewBox="0 0 7 7"><path d="M2 0 H5 V2 H7 V5 H5 V7 H2 V5 H0 V2 H2 Z" fill="#000"/></svg>
<svg style="left:901px;top:819px" width="7" height="10" viewBox="0 0 7 10"><rect x="0.75" y="0.75" width="5.5" height="8.5" fill="none" stroke="#000" stroke-width="1.5"/></svg>
<div class="a" style="left:910px;top:810px;width:70px;height:21px;background:#636363;border-right:1px solid #3a3a3a"></div>
<svg style="left:911px;top:821px" width="7" height="7" viewBox="0 0 7 7"><path d="M2 0 H5 V2 H7 V5 H5 V7 H2 V5 H0 V2 H2 Z" fill="#000"/></svg>
<svg style="left:971px;top:819px" width="7" height="10" viewBox="0 0 7 10"><rect x="0.75" y="0.75" width="5.5" height="8.5" fill="none" stroke="#000" stroke-width="1.5"/></svg>
<div class="a" style="left:980px;top:810px;width:60px;height:21px;background:#636363;border-right:1px solid #3a3a3a"></div>
<svg style="left:981px;top:821px" width="7" height="7" viewBox="0 0 7 7"><path d="M2 0 H5 V2 H7 V5 H5 V7 H2 V5 H0 V2 H2 Z" fill="#000"/></svg>
<svg style="left:1031px;top:819px" width="7" height="10" viewBox="0 0 7 10"><rect x="0.75" y="0.75" width="5.5" height="8.5" fill="none" stroke="#000" stroke-width="1.5"/></svg>
<div class="a" style="left:1040px;top:810px;width:60px;height:21px;background:#636363;border-right:1px solid #3a3a3a"></div>
<svg style="left:1041px;top:821px" width="7" height="7" viewBox="0 0 7 7"><path d="M2 0 H5 V2 H7 V5 H5 V7 H2 V5 H0 V2 H2 Z" fill="#000"/></svg>
<svg style="left:1091px;top:819px" width="7" height="10" viewBox="0 0 7 10"><rect x="0.75" y="0.75" width="5.5" height="8.5" fill="none" stroke="#000" stroke-width="1.5"/></svg>
<div class="a" style="left:1100px;top:810px;width:50px;height:21px;background:#636363;border-right:1px solid #3a3a3a"></div>
<svg style="left:1101px;top:821px" width="7" height="7" viewBox="0 0 7 7"><path d="M2 0 H5 V2 H7 V5 H5 V7 H2 V5 H0 V2 H2 Z" fill="#000"/></svg>
<svg style="left:1141px;top:819px" width="7" height="10" viewBox="0 0 7 10"><rect x="0.75" y="0.75" width="5.5" height="8.5" fill="none" stroke="#000" stroke-width="1.5"/></svg>
<div class="a" style="left:1150px;top:810px;width:40px;height:21px;background:#636363;border-right:1px solid #3a3a3a"></div>
<svg style="left:1151px;top:821px" width="7" height="7" viewBox="0 0 7 7"><path d="M2 0 H5 V2 H7 V5 H5 V7 H2 V5 H0 V2 H2 Z" fill="#000"/></svg>
<svg style="left:1181px;top:819px" width="7" height="10" viewBox="0 0 7 10"><rect x="0.75" y="0.75" width="5.5" height="8.5" fill="none" stroke="#000" stroke-width="1.5"/></svg>
<svg style="left:1191px;top:821px" width="7" height="7" viewBox="0 0 7 7"><circle cx="3.5" cy="3.5" r="2.5" fill="none" stroke="#111" stroke-width="1.4"/></svg>
<div class="a" style="left:1028px;top:769.5px;width:12px;height:37.5px;background:rgba(190,20,20,0.32);border:1.5px solid #c40000"></div>
<div class="a" style="left:1033.5px;top:807px;width:1.3px;height:120px;background:#c00000;"></div>
<div class="a" style="left:530px;top:927px;width:945px;height:16px;background:#535353;"></div>
<div class="a" style="left:531px;top:929px;width:107px;height:12px;background:#606060;border-radius:6px"></div>
<div class="a" style="left:51px;top:927px;width:478px;height:16px;background:#535353;"></div>
<div class="a" style="left:528px;top:726px;width:2px;height:217px;background:#1e1e1e;"></div>
<svg style="left:0px;top:0px" width="1919" height="943" viewBox="0 0 1919 943"><g transform="translate(0.0 0.0)"><path d="M660.5 218.6 Q680 217 696.8 209.2 Q681 213.1 660.5 218.6 Z" fill="#141414"/><path d="M681 227 H699 M693.6 221.3 V227" stroke="#141414" stroke-width="1.6" fill="none"/><path d="M646.3 224 C647.8 229.5 651.5 233 657 235" stroke="#141414" stroke-width="2.6" stroke-linecap="round" fill="none"/><path d="M660.6 223.4 C660.1 227.5 661.3 231 664 233.8" stroke="#141414" stroke-width="2.4" stroke-linecap="round" fill="none"/><path d="M654.3 237.8 L658.5 232.6 L662 230.9 L700.3 230.9 L705.3 235.5 L704.5 237.8 Z" fill="#1a1a1a"/><path d="M654.3 237 L668.3 252.6 L669.2 251.8 L664.8 237 Z" fill="#141414"/><g transform="translate(0.0 0)"><path d="M675.3 237.6 L701.4 237.6 L700.2 254.1 L679.8 254.1 Z" fill="#ff4a4a" stroke="#141414" stroke-width="1.5" stroke-linejoin="round"/><path d="M676 238.2 L700.9 238.2 L700.5 244.8 L677.8 244.8 Z" fill="#6c0d0d"/><circle cx="691" cy="249.3" r="3.6" fill="#ff9c9c"/><circle cx="682.6" cy="241.4" r="3" fill="#fff"/><ellipse cx="690.9" cy="243.9" rx="1.9" ry="4.3" fill="#141414"/><circle cx="694" cy="245.6" r="1.2" fill="#fff"/></g><rect x="679" y="233.2" width="5" height="1.3" fill="#666"/><path d="M733.7 208.3 Q757 217.5 783 220.4 Q758 213.7 733.7 208.3 Z" fill="#141414"/><path d="M736.2 227 H754.7 M739.1 221.4 V227" stroke="#141414" stroke-width="1.6" fill="none"/><path d="M729.2 237 L736.2 230.9 L779 230.9 L787 234.5 L785 237.6 L729.5 237.6 Z" fill="#1a1a1a"/><path d="M782 223.6 C782.3 227 781 230.5 777.8 233.5" stroke="#141414" stroke-width="2.4" stroke-linecap="round" fill="none"/><path d="M796.3 224.4 C794 229 789.5 233 783.8 235.3" stroke="#141414" stroke-width="2.6" stroke-linecap="round" fill="none"/><path d="M788.3 236.8 L771.9 253.2 L771 252.4 L776 237 Z" fill="#141414"/><path d="M738.5 237.5 L770 237.5 L763.9 253.8 L740 253.8 Z" fill="#ff4a4a" stroke="#141414" stroke-width="1.5" stroke-linejoin="round"/><path d="M739.2 238.1 L769.3 238.1 L766.8 244.9 L739.6 244.9 Z" fill="#6c0d0d"/><circle cx="754.6" cy="249.2" r="3.7" fill="#ff9c9c"/><circle cx="746.1" cy="241.4" r="3" fill="#fff"/><ellipse cx="754.9" cy="243.6" rx="1.9" ry="4.3" fill="#141414"/><circle cx="757.5" cy="246.1" r="1.3" fill="#fff"/><rect x="750" y="233.2" width="5" height="1.3" fill="#666"/></g><path d="M709.8 277.5 H732.6" stroke="#141414" stroke-width="1.3"/><g transform="translate(384.7 0)"><path d="M660.5 218.6 Q680 217 696.8 209.2 Q681 213.1 660.5 218.6 Z" fill="#141414"/><path d="M681 227 H699 M693.6 221.3 V227" stroke="#141414" stroke-width="1.6" fill="none"/><path d="M646.3 224 C647.8 229.5 651.5 233 657 235" stroke="#141414" stroke-width="2.6" stroke-linecap="round" fill="none"/><path d="M660.6 223.4 C660.1 227.5 661.3 231 664 233.8" stroke="#141414" stroke-width="2.4" stroke-linecap="round" fill="none"/><path d="M654.3 237.8 L658.5 232.6 L662 230.9 L700.3 230.9 L705.3 235.5 L704.5 237.8 Z" fill="#1a1a1a"/><path d="M654.3 237 L668.3 252.6 L669.2 251.8 L664.8 237 Z" fill="#141414"/><g transform="translate(-4.7 0)"><path d="M675.3 237.6 L701.4 237.6 L700.2 254.1 L679.8 254.1 Z" fill="#ff4a4a" stroke="#141414" stroke-width="1.5" stroke-linejoin="round"/><path d="M676 238.2 L700.9 238.2 L700.5 244.8 L677.8 244.8 Z" fill="#6c0d0d"/><ellipse cx="689.1" cy="243.9" rx="1.9" ry="4.3" fill="#141414"/></g><rect x="679" y="233.2" width="5" height="1.3" fill="#666"/><path d="M733.7 208.3 Q757 217.5 783 220.4 Q758 213.7 733.7 208.3 Z" fill="#141414"/><path d="M736.2 227 H754.7 M739.1 221.4 V227" stroke="#141414" stroke-width="1.6" fill="none"/><path d="M729.2 237 L736.2 230.9 L779 230.9 L787 234.5 L785 237.6 L729.5 237.6 Z" fill="#1a1a1a"/><path d="M782 223.6 C782.3 227 781 230.5 777.8 233.5" stroke="#141414" stroke-width="2.4" stroke-linecap="round" fill="none"/><path d="M796.3 224.4 C794 229 789.5 233 783.8 235.3" stroke="#141414" stroke-width="2.6" stroke-linecap="round" fill="none"/><path d="M788.3 236.8 L771.9 253.2 L771 252.4 L776 237 Z" fill="#141414"/><path d="M738.5 237.5 L770 237.5 L763.9 253.8 L740 253.8 Z" fill="#ff4a4a" stroke="#141414" stroke-width="1.5" stroke-linejoin="round"/><path d="M739.2 238.1 L769.3 238.1 L766.8 244.9 L739.6 244.9 Z" fill="#6c0d0d"/><ellipse cx="753.4" cy="243.6" rx="1.9" ry="4.3" fill="#141414"/><rect x="750" y="233.2" width="5" height="1.3" fill="#666"/></g><path d="M1091.7 275.2 Q1104 272.3 1116.6 273.8 Q1114.5 280.3 1101 280.4 Q1092.3 280 1091.7 275.2 Z" fill="#ff7272" stroke="#141414" stroke-width="1.1"/><ellipse cx="856.2" cy="258.6" rx="19.5" ry="8.5" fill="#ffc6c6"/><ellipse cx="957.1" cy="258.6" rx="24.7" ry="8.5" fill="#ffc6c6"/><path d="M846 254 L845 258 M853 252 L851 263 M860.5 254 L859 262 M866 257 L865.5 259.5 M945.5 254 L946.5 258 M954 252.5 L955.5 260 M962 252 L964 262 M968.5 255 L970 258" stroke="#fff" stroke-width="0.9"/><path d="M841.3 219.7 C852 213 860 208.8 868 208.6 C876 208.4 883 211 887.7 215.6 C882 213 876 211.2 868 211.2 C860 211.2 852 214.5 841.3 219.7 Z" fill="#141414"/><path d="M829 246.3 L843 241.5 L845.2 239.2 Q866 248.3 890 242.2 L890.6 243.8 Q870 255.3 853.5 250.8 L840.4 254.4 L846.5 248.3 Q838 247.5 829 246.3 Z" fill="#141414"/><path d="M871.4 242.4 Q881 241.6 890 237.8 M885.5 230.4 Q887.2 234 887 238.4" stroke="#141414" stroke-width="1.2" fill="none"/><path d="M917.8 216 C924 211 932 208.4 940 208.2 C952 208.1 962 213 972.7 219.5 C962 215 952 211 940 211 C932 211 924 213 917.8 216 Z" fill="#141414"/><path d="M916.3 243 Q945 248.6 971.2 239.3 L989.1 246.8 L973 247.4 L975.7 253.1 L965 249.8 Q945 255.8 916.3 244.8 Z" fill="#141414"/><path d="M917 238.2 Q925 241.6 935.6 242.5 M921.1 230.8 Q919.6 234.5 919.6 238.5" stroke="#141414" stroke-width="1.2" fill="none"/><path d="M889.4 281.6 Q906 280 923.1 278.7 Q921 297.2 906 297.2 Q893 296.5 889.4 281.6 Z" fill="#8c2a2a" stroke="#141414" stroke-width="1.2"/><path d="M891.8 287.8 Q897 283.8 902 285.2 Q906 287.6 910 285.2 Q916 283 920.8 284.6 Q917 296.2 906 296.3 Q895.5 295.8 891.8 287.8 Z" fill="#ff7b80" stroke="#2a1010" stroke-width="0.8"/><path d="M658.7 339.3 Q679 336.8 696.3 329.8 Q680 334.5 658.7 339.3 Z" fill="#141414"/><path d="M734 329.4 Q757 338.5 782.5 341.7 Q758 335.5 734 329.4 Z" fill="#141414"/><path d="M681.1 354.2 H698.6 M693.7 348.3 V354.2 M735.2 354.2 H757 M740.8 348.3 V354.2" stroke="#141414" stroke-width="1.3" fill="none"/><path d="M643.4 365.2 Q652 363.5 658.3 358.7 L696.6 358.7 L701.5 363.6 L671.4 366.1 L657.4 369.7 L660.5 366.6 Z" fill="#141414"/><path d="M729.9 364.2 L735.4 358.7 L783.1 358.7 Q790 364 800.3 365.7 L780.4 366.3 L784 369.6 L768.2 366.3 Z" fill="#141414"/><rect x="676" y="361.3" width="4" height="1.2" fill="#666"/><rect x="752" y="361.3" width="4" height="1.2" fill="#666"/><path d="M710.1 352.6 L710.6 363.9 M714.2 353.5 L715.4 361.6 M722.5 351.3 L722.9 367.5" stroke="#141414" stroke-width="1.2"/><path d="M772.3 374.3 Q770 379 770.8 383 Q773 385 775.5 383.7 M787.6 374.3 Q781 383 781.5 389 Q782.5 395.5 787.5 395.2 Q793.5 394.5 793 384.2" stroke="#141414" stroke-width="1.1" fill="none"/><path d="M697 402.2 Q717 401.2 736.7 399.5 Q731 418 716.4 417.8 Q702 417 697 402.2 Z" fill="#8c3a3a" stroke="#141414" stroke-width="1.2"/><path d="M702 408 Q710 404 716 406 Q724 403.5 733 404.8 Q727 417 716.4 417 Q706.5 416.5 702 408 Z" fill="#ff7070" stroke="#222" stroke-width="0.7"/><path d="M853.3 339.3 C862 332 870 328.5 877 328.4 C884 328.3 889 331 892.3 335.7 C888 333 883 331 877 331 C870 331.2 862 334 853.3 339.3 Z" fill="#141414"/><path d="M926.9 332.5 C933 327.5 940 325.2 947 325.2 C958 325.2 967 329.5 977 336.1 C967 332 958 328 947 328 C940 328.1 933 330 926.9 332.5 Z" fill="#141414"/><path d="M880.3 344.4 Q888 346 893.8 351.6 M891 344 Q892.5 347 892 350.5" stroke="#141414" stroke-width="1.2" fill="none"/><path d="M926.1 348.8 Q934 343 944.4 341.2 M929.3 342 Q930.5 345 930 347.5" stroke="#141414" stroke-width="1.2" fill="none"/><ellipse cx="880.5" cy="370.2" rx="13.3" ry="15.3" fill="#6e0e0e" stroke="#141414" stroke-width="1.5"/><ellipse cx="885.2" cy="363.3" rx="4.3" ry="4.6" fill="#8c1818"/><circle cx="880.5" cy="374.8" r="9.5" fill="#ff4a4a"/><circle cx="881.5" cy="379.5" r="4.6" fill="#ff9c9c"/><circle cx="873.5" cy="359.3" r="3" fill="#fff"/><ellipse cx="879.6" cy="364" rx="1.95" ry="4.95" fill="#141414"/><ellipse cx="883" cy="368.3" rx="1.95" ry="1.50" fill="#fff"/><ellipse cx="951" cy="368.5" rx="14.9" ry="16.9" fill="#6e0e0e" stroke="#141414" stroke-width="1.5"/><ellipse cx="956.2" cy="360.9" rx="4.8" ry="5.1" fill="#8c1818"/><circle cx="951" cy="373.6" r="10.5" fill="#ff4a4a"/><circle cx="950.8" cy="378.6" r="5" fill="#ff9c9c"/><circle cx="943.2" cy="359.1" r="3.4" fill="#fff"/><ellipse cx="949.6" cy="365.5" rx="2.07" ry="5.50" fill="#141414"/><ellipse cx="954.5" cy="368.5" rx="2.21" ry="1.70" fill="#fff"/><path d="M857 357.5 C862 350 870 347 877.5 347.2 C886 347.4 893 351.5 897 358.7 L895.5 359.8 C891 355 885 352.5 877.5 352.6 C870 352.8 864 355 860.5 359.5 Z" fill="#1a1a1a"/><path d="M852.5 350 C854 354 857 356.5 861 357 L859 360 C855 358 853 354.5 852.5 350 Z" fill="#141414"/><path d="M842.6 359.1 C846 362 850 363.3 854.5 363 L853.5 365.5 C849 365 845.5 362.5 842.6 359.1 Z" fill="#141414"/><path d="M852.5 362.5 L859.5 356.5 L862 359.5 L860.5 366 L864.2 377.8 L863 378 L854 367 Z" fill="#141414"/><path d="M923.7 355.6 C930 348 939 344.6 948.4 344.6 C960 344.6 970 349 980.2 359.5 L978 361 C969 354.5 959 350.2 948.4 350.2 C939 350.2 931 352.5 925 357 Z" fill="#1a1a1a"/><path d="M980.2 344.4 C980 349.5 977 353 972.5 354.5 L971 352 C975 350.5 978.5 348 980.2 344.4 Z" fill="#141414"/><path d="M994.5 354.8 C991.5 359.5 987 362.5 982 363.5 L981.5 361 C986 360 990.5 358 994.5 354.8 Z" fill="#141414"/><path d="M976 355.5 L983.5 362.5 L971.8 376.4 L970.8 376 L973.5 363 Z" fill="#141414"/><path d="M898.3 403 Q914.2 419 930 403" stroke="#141414" stroke-width="1.3" fill="none"/><path d="M1047.4 329.9 Q1080 330 1097 318.4 Q1078 326 1047.4 329.9 Z" fill="#141414"/><path d="M1123 317.2 Q1145 331.5 1188.6 331.2 Q1146 327.5 1123 317.2 Z" fill="#141414"/><path d="M1035.3 357.9 L1049 353.8 L1052.8 351.5 Q1074 362 1097.4 354.7 L1097.8 356.5 Q1076 370 1058 362.3 L1046.7 364.9 L1051 360.2 Z" fill="#141414"/><path d="M1079.2 354 Q1090 353.5 1097.6 350.3 M1093.5 342.6 Q1095 346 1095 350.3" stroke="#141414" stroke-width="1.2" fill="none"/><path d="M1123.7 354.7 Q1147 363 1178.8 351.5 L1196.8 358.5 L1185 359.5 L1183.5 364.9 L1171 362 Q1146 371 1123.3 356.5 Z" fill="#141414"/><rect x="1068" y="360.5" width="4" height="1.1" fill="#666"/><rect x="1153" y="360.5" width="4" height="1.1" fill="#666"/><path d="M1124.3 350.9 Q1132 354.2 1143.4 354.5 M1128.5 342.6 Q1127 346 1127 350.5" stroke="#141414" stroke-width="1.2" fill="none"/><path d="M1098.9 401.8 Q1102 393.5 1114.1 393.5 Q1127 393.8 1128.8 401.1 Q1114 402.5 1098.9 401.8 Z" fill="#ff7070" stroke="#141414" stroke-width="1.2"/><path d="M854.5 454.2 L904 475.3 L902 479.5 Z" fill="#141414"/><path d="M978.7 449 L921 475.3 L923 479.5 Z" fill="#141414"/><path d="M908.1 465.9 Q912.8 472.3 907.5 478.7 M916.9 465.6 Q912.5 472.3 918.9 478.7 M913.2 475 L914.5 479.3" stroke="#141414" stroke-width="1.6" fill="none"/><ellipse cx="884.8" cy="496.8" rx="11.1" ry="14" fill="#6e0e0e" stroke="#141414" stroke-width="1.5"/><ellipse cx="888.7" cy="490.5" rx="3.6" ry="4.2" fill="#8c1818"/><circle cx="884.8" cy="501.0" r="8.0" fill="#ff4a4a"/><circle cx="885.5" cy="505.5" r="4.2" fill="#ff9c9c"/><circle cx="879" cy="490" r="2.6" fill="#fff"/><ellipse cx="884.2" cy="494" rx="2.07" ry="4.95" fill="#141414"/><ellipse cx="887.5" cy="497.5" rx="1.69" ry="1.30" fill="#fff"/><ellipse cx="953.3" cy="495" rx="13.1" ry="15.7" fill="#6e0e0e" stroke="#141414" stroke-width="1.5"/><ellipse cx="957.9" cy="487.9" rx="4.2" ry="4.7" fill="#8c1818"/><circle cx="953.3" cy="499.7" r="9.5" fill="#ff4a4a"/><circle cx="953.5" cy="504" r="4.8" fill="#ff9c9c"/><circle cx="946.5" cy="487" r="3" fill="#fff"/><ellipse cx="952.5" cy="492" rx="2.30" ry="5.50" fill="#141414"/><ellipse cx="956" cy="495" rx="1.95" ry="1.50" fill="#fff"/><path d="M863.5 481.5 C867 474 873 470.8 880.1 470.8 C889 470.8 896 475.5 900.8 483.8 L898.8 485.3 C894 480.5 888 477.2 880.1 477 C874 477 869.5 479.5 866.5 484 Z" fill="#1a1a1a"/><path d="M857.4 475.2 C858.5 479.5 861.5 482 866 482.3 L864.5 485.5 C860 484 857.5 480 857.4 475.2 Z" fill="#141414"/><path d="M846.9 484.6 C850 488.5 854 490 858.5 489.8 L858 493 C853 492.5 849.5 489 846.9 484.6 Z" fill="#141414"/><path d="M857 489.5 C859 486 862 483.5 865 482.5 L867.5 485.5 C864.5 488 863 491 864 494 L868.5 502.6 L867.3 502.8 C862 498 858.5 494 857 489.5 Z" fill="#141414"/><path d="M928.3 481.5 C934 473 943 468.8 953.6 468.8 C964 468.8 974 473 985.5 486 L983 487.8 C972 479 964 475.2 953.6 475.2 C944 475.2 936 477.5 930.8 483 Z" fill="#1a1a1a"/><path d="M984.5 469.4 C984.5 474.5 981 478.5 975.5 480 L974 476.8 C978.5 475.5 982.5 472.5 984.5 469.4 Z" fill="#141414"/><path d="M999.1 479.9 C996 485 991 488.3 985.5 489.3 L985 486 C990 485 995 482.8 999.1 479.9 Z" fill="#141414"/><path d="M986.5 488.5 C985.5 485.5 982.5 483 979 481.5 L976.5 484.5 C979 487 980 490 978.5 493.5 L975.3 501.2 L976.4 501.5 C981.5 497 985 493 986.5 488.5 Z" fill="#141414"/><path d="M902.3 530 L939 530.5" stroke="#141414" stroke-width="1.3"/></svg>
</body></html>
